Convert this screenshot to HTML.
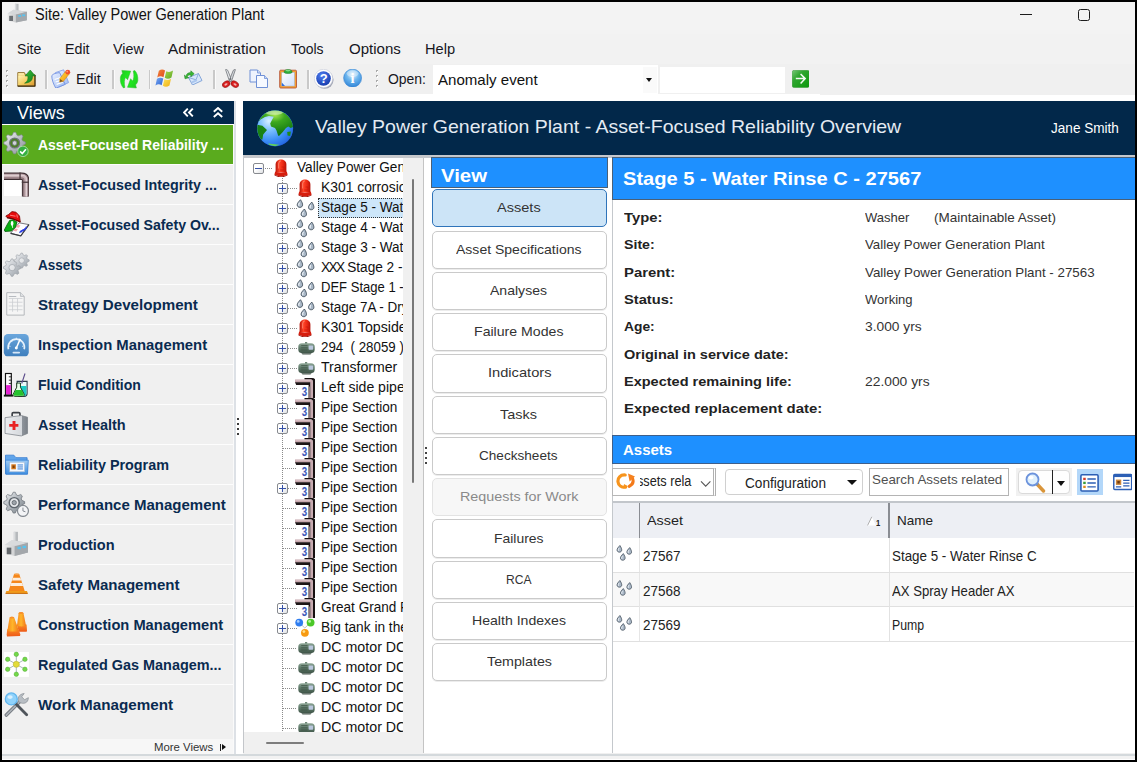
<!DOCTYPE html>
<html lang="en"><head><meta charset="utf-8"><title>Site: Valley Power Generation Plant</title>
<style>
html,body{margin:0;padding:0;width:1137px;height:762px;overflow:hidden;background:#000;font-family:"Liberation Sans",sans-serif}
#app{position:absolute;left:0;top:0;width:1137px;height:762px;background:#000;overflow:hidden}
#app div,#app span.t,#app svg{position:absolute}
span.t{white-space:pre;transform-origin:0 50%;display:block}
</style></head>
<body>
<div id="app">
<div class="window" style="left:2px;top:2px;width:1133px;height:758px;background:#f0f0f0;overflow:hidden">
<div class="titlebar" style="left:0px;top:0px;width:1133px;height:32px;background:#f3f3f3">
<svg style="left:4.3px;top:1.4px" width="22.4" height="21" viewBox="0 0 21 21" preserveAspectRatio="none"><defs><linearGradient id="fg1" x1="0" y1="0" x2="1" y2="0"><stop offset="0" stop-color="#e9e9e9"/><stop offset="1" stop-color="#a9adb0"/></linearGradient></defs>
<rect x="8.4" y="0.8" width="3.4" height="8" fill="#b9bcbf"/><rect x="8.4" y="0.8" width="1.3" height="8" fill="#d8dadc"/>
<path d="M1.5 10.5 L7 6.8 L19.5 8.8 L19.5 17.2 L9 19.5 L1.5 17.6 Z" fill="url(#fg1)"/>
<path d="M1.5 10.5 L7 6.8 L19.5 8.8 L12.5 11.2 Z" fill="#d6d8da"/>
<path d="M9.3 11.5 L19.5 8.8 L19.5 17.2 L9.3 19.5 Z" fill="#a4a8ac"/>
<rect x="3" y="12.8" width="3.6" height="5.2" fill="#6c7074"/>
<rect x="11.5" y="12" width="2.6" height="1.8" fill="#57c3f0"/><rect x="15.2" y="11.4" width="2.8" height="1.8" fill="#57c3f0"/></svg>
<span class="t" style="left:32.60px;top:2.59px;font-size:15.6px;line-height:20px;color:#111;transform:scaleX(0.9297);">Site: Valley Power Generation Plant</span>
<div style="left:1017.8px;top:11.8px;width:12.3px;height:1.2px;background:#1c1c1c;"></div>
<div style="left:1076px;top:6.9px;width:12px;height:11.9px;box-sizing:border-box;border:1.3px solid #1c1c1c;border-radius:2.5px"></div>
</div>
<div class="menubar" style="left:0px;top:32px;width:1133px;height:30px;background:#f2f2f2">
<span class="t" style="left:14.70px;top:5.10px;font-size:15px;line-height:19px;color:#16161e;transform:scaleX(0.9397);">Site</span>
<span class="t" style="left:62.80px;top:5.10px;font-size:15px;line-height:19px;color:#16161e;transform:scaleX(0.9513);">Edit</span>
<span class="t" style="left:111.30px;top:5.10px;font-size:15px;line-height:19px;color:#16161e;transform:scaleX(0.9519);">View</span>
<span class="t" style="left:166.40px;top:5.10px;font-size:15px;line-height:19px;color:#16161e;transform:scaleX(1.0290);">Administration</span>
<span class="t" style="left:289.20px;top:5.10px;font-size:15px;line-height:19px;color:#16161e;transform:scaleX(0.9306);">Tools</span>
<span class="t" style="left:346.50px;top:5.10px;font-size:15px;line-height:19px;color:#16161e;transform:scaleX(1.0019);">Options</span>
<span class="t" style="left:422.50px;top:5.10px;font-size:15px;line-height:19px;color:#16161e;transform:scaleX(0.9754);">Help</span>
</div>
<div class="toolbar" style="left:0px;top:62px;width:1133px;height:30px;background:#f0f0f0">
<div style="left:3.7px;top:6px;width:2px;height:2px;background:#a9a9a9;"></div><div style="left:4.7px;top:7px;width:1.6px;height:1.6px;background:#fff;"></div><div style="left:3.7px;top:11px;width:2px;height:2px;background:#a9a9a9;"></div><div style="left:4.7px;top:12px;width:1.6px;height:1.6px;background:#fff;"></div><div style="left:3.7px;top:16px;width:2px;height:2px;background:#a9a9a9;"></div><div style="left:4.7px;top:17px;width:1.6px;height:1.6px;background:#fff;"></div><div style="left:3.7px;top:21px;width:2px;height:2px;background:#a9a9a9;"></div><div style="left:4.7px;top:22px;width:1.6px;height:1.6px;background:#fff;"></div>
<svg style="left:14.8px;top:5.6px" width="19" height="17.2" viewBox="0 0 19 17.2"><defs><linearGradient id="fd1" x1="0" y1="0" x2="1" y2="1"><stop offset="0" stop-color="#fff3b8"/><stop offset="0.55" stop-color="#f2cc5c"/><stop offset="1" stop-color="#d9942a"/></linearGradient>
<linearGradient id="fd2" x1="0" y1="0" x2="1" y2="1"><stop offset="0" stop-color="#35c03a"/><stop offset="1" stop-color="#167a1c"/></linearGradient></defs>
<path d="M0.8 2.6 L7.4 2.6 L8.4 4.6 L17.8 4.6 L17.8 16 L0.8 16 Z" fill="#e9c766" stroke="#8a6a2a" stroke-width="0.9"/>
<rect x="1.3" y="3.2" width="5.8" height="1.6" fill="#fdf0b4"/>
<rect x="1.2" y="5.4" width="16.2" height="10.2" fill="url(#fd1)"/>
<path d="M0.6 16.2 L18.2 16.2 M18 5 L18 16.4" stroke="#3c2a08" stroke-width="1.2" fill="none"/>
<path d="M13.2 0 L18.4 6 L15.6 6 C15.8 10 13.6 12.8 7.6 13.2 C10.8 11.4 11.2 9 10.8 6 L8 6 Z" fill="url(#fd2)" stroke="#146c18" stroke-width="0.5"/></svg>
<div style="left:43.2px;top:6.2px;width:1.6px;height:18.8px;background:#c9c9c9;"></div><div style="left:44.9px;top:6.2px;width:1px;height:18.8px;background:#fbfbfb;"></div>
<svg style="left:49.4px;top:4.8px" width="19.8" height="19.6" viewBox="0 0 19.8 19.6"><defs><linearGradient id="ed1" x1="0" y1="0" x2="1" y2="1"><stop offset="0" stop-color="#eaf1ff"/><stop offset="1" stop-color="#9db9f2"/></linearGradient>
<linearGradient id="ed2" x1="0" y1="0" x2="1" y2="1"><stop offset="0" stop-color="#ffe23a"/><stop offset="1" stop-color="#f08a14"/></linearGradient></defs>
<path d="M4.4 3.6 L12.6 0.8 L17.6 13.6 L7.6 18.2 Z" fill="url(#ed1)" stroke="#7d9be6" stroke-width="0.8"/>
<path d="M0.8 6.6 C2.4 4.6 5 4 8.6 3.6 L14.2 15.4 L4.8 19.2 C2.6 15.4 0.6 10.4 0.8 6.6 Z" fill="url(#ed1)" stroke="#6f8fe0" stroke-width="0.9"/>
<path d="M3.6 10.6 L9.6 8.6 M4.6 13 L10.8 10.9 M5.6 15.4 L11.8 13.3" stroke="#ffffff" stroke-width="1.1"/>
<path d="M8.8 9.6 L14.6 2.2 L18.2 5 L12.4 12.4 L8.6 13.2 Z" fill="url(#ed2)" stroke="#c07a10" stroke-width="0.4"/>
<path d="M9.2 10 L8.8 13 L12 12.2 Z" fill="#7a5520"/>
<circle cx="16.8" cy="3.2" r="2.4" fill="#f0502a"/><circle cx="16.2" cy="2.6" r="0.9" fill="#ff9a7a"/></svg>
<span class="t" style="left:74.00px;top:4.90px;font-size:15px;line-height:19px;color:#16161e;transform:scaleX(0.9590);">Edit</span>
<div style="left:110.3px;top:6.2px;width:1.6px;height:18.8px;background:#c9c9c9;"></div><div style="left:112px;top:6.2px;width:1px;height:18.8px;background:#fbfbfb;"></div>
<svg style="left:114px;top:2px" width="26" height="26" viewBox="0 0 26 26"><defs><linearGradient id="rf" x1="0" y1="0" x2="1" y2="1"><stop offset="0" stop-color="#22c322"/><stop offset="0.5" stop-color="#1fe81f"/><stop offset="1" stop-color="#19b419"/></linearGradient></defs>
<path d="M5.8 4.4 L14.7 5.1 L11.6 13.7 L9.6 11.4 C8.2 13.4 8 17 8.9 21.4 L7.4 21.9 C5.2 19.6 4 16 4.4 11.6 C4.7 9.8 5.4 8.6 6.6 7.6 Z" fill="url(#rf)" stroke="#2fbf2f" stroke-width="0.5"/>
<path d="M5.8 4.4 L14.7 5.1 L11.6 13.7 L9.6 11.4 C8.2 13.4 8 17 8.9 21.4 L7.4 21.9 C5.2 19.6 4 16 4.4 11.6 C4.7 9.8 5.4 8.6 6.6 7.6 Z" fill="url(#rf)" stroke="#2fbf2f" stroke-width="0.5" transform="rotate(180 13.1 13.2)"/></svg>
<div style="left:146.5px;top:6.2px;width:1.6px;height:18.8px;background:#c9c9c9;"></div><div style="left:148.2px;top:6.2px;width:1px;height:18.8px;background:#fbfbfb;"></div>
<svg style="left:153.4px;top:5px" width="18.5" height="18.5" viewBox="0 0 18 18.5"><defs>
<linearGradient id="wf1" x1="0" y1="0" x2="1" y2="1"><stop offset="0" stop-color="#f0853a"/><stop offset="1" stop-color="#e2491c"/></linearGradient>
<linearGradient id="wf2" x1="0" y1="0" x2="1" y2="1"><stop offset="0" stop-color="#a6d84e"/><stop offset="1" stop-color="#5fa823"/></linearGradient>
<linearGradient id="wf3" x1="0" y1="0" x2="1" y2="1"><stop offset="0" stop-color="#7daaf2"/><stop offset="1" stop-color="#2a63d2"/></linearGradient>
<linearGradient id="wf4" x1="0" y1="0" x2="1" y2="1"><stop offset="0" stop-color="#fce45a"/><stop offset="1" stop-color="#f0ae14"/></linearGradient></defs>
<path d="M3.6 1.8 C5.8 0 8 0.2 9.8 1.6 L8.2 8.2 C6.3 7 4.2 7 2 8.4 Z" fill="url(#wf1)"/>
<path d="M11 2.2 C13 3.4 15.4 3.2 17.8 1.6 L16.2 8.4 C14 10 11.7 10 9.5 8.8 Z" fill="url(#wf2)"/>
<path d="M1.7 9.8 C3.9 8.4 6 8.4 8 9.6 L6.4 16.2 C4.4 15 2.3 15 0.2 16.4 Z" fill="url(#wf3)"/>
<path d="M9.2 10.2 C11.4 11.4 13.6 11.3 15.8 9.8 L14.2 16.5 C12 18 9.8 18.2 7.6 16.8 Z" fill="url(#wf4)"/></svg>
<svg style="left:182px;top:5.5px" width="18.5" height="15.5" viewBox="0 0 18.5 15.5"><path d="M4.5 7.5 L14.5 3.5 L18 10.5 L8.5 15 Z" fill="#d7e6fa" stroke="#7c9fd6" stroke-width="0.9"/>
<path d="M4.5 7.5 L12 9.8 L14.5 3.5" fill="none" stroke="#7c9fd6" stroke-width="0.8"/>
<path d="M7.5 11.5 L12.5 9.3 L13.4 11 L8.3 13.3 Z" fill="#aac6ee"/>
<path d="M6.8 0.8 L6.8 2.6 C4 2.6 2.2 4 2 6.5 L0.4 5 L1 8.8 L4.8 7.8 L3.2 6.8 C3.6 5.4 4.8 4.8 6.8 4.9 L6.8 6.8 L10.2 3.7 Z" fill="#39b636" stroke="#1e7f22" stroke-width="0.5"/></svg>
<div style="left:211.4px;top:6.2px;width:1.6px;height:18.8px;background:#c9c9c9;"></div><div style="left:213.1px;top:6.2px;width:1px;height:18.8px;background:#fbfbfb;"></div>
<svg style="left:219.5px;top:5px" width="17" height="19" viewBox="0 0 17 19"><path d="M3.6 0.6 C4.6 0.2 5.6 0.8 6 2 L9.8 11.6 L7.6 12.6 Z" fill="#e9ebee" stroke="#5d6167" stroke-width="0.7"/>
<path d="M13.4 0.6 C12.4 0.2 11.4 0.8 11 2 L7.2 11.6 L9.4 12.6 Z" fill="#d2d5d9" stroke="#5d6167" stroke-width="0.7"/>
<circle cx="8.5" cy="10" r="0.8" fill="#4a4e54"/>
<ellipse cx="4.2" cy="15.2" rx="4" ry="2.9" transform="rotate(-28 4.2 15.2)" fill="#d81e1e" stroke="#8e0f0f" stroke-width="0.6"/>
<ellipse cx="12.8" cy="15.2" rx="4" ry="2.9" transform="rotate(28 12.8 15.2)" fill="#d81e1e" stroke="#8e0f0f" stroke-width="0.6"/>
<ellipse cx="4" cy="15.4" rx="1.7" ry="1" transform="rotate(-28 4 15.4)" fill="#f4b0b0"/>
<ellipse cx="13" cy="15.4" rx="1.7" ry="1" transform="rotate(28 13 15.4)" fill="#f4b0b0"/></svg>
<svg style="left:247px;top:5px" width="19.5" height="19.5" viewBox="0 0 19.5 19.5"><path d="M1 1 L8.5 1 L11.5 4 L11.5 13 L1 13 Z" fill="#eef3fd" stroke="#6f90d6" stroke-width="1"/>
<path d="M8.5 1 L8.5 4 L11.5 4" fill="#c9d8f6" stroke="#6f90d6" stroke-width="0.8"/>
<path d="M7.5 6.5 L15.5 6.5 L18.5 9.5 L18.5 18.5 L7.5 18.5 Z" fill="#f6f9ff" stroke="#6f90d6" stroke-width="1"/>
<path d="M15.5 6.5 L15.5 9.5 L18.5 9.5" fill="#c9d8f6" stroke="#6f90d6" stroke-width="0.8"/></svg>
<svg style="left:276.5px;top:5px" width="18.2" height="19.6" viewBox="0 0 18.2 19.6"><defs><linearGradient id="ps1" x1="0" y1="0" x2="1" y2="1"><stop offset="0" stop-color="#ffffff"/><stop offset="1" stop-color="#cfe0fb"/></linearGradient></defs>
<rect x="0.7" y="1.2" width="16.8" height="17.8" rx="1" fill="#f5a030" stroke="#b5563a" stroke-width="0.9"/>
<rect x="2.8" y="3.4" width="12.6" height="13.6" fill="url(#ps1)" stroke="#9ab4e4" stroke-width="0.5"/>
<path d="M2.8 13.6 L6 17 L2.8 17 Z" fill="#2f6fe0"/>
<path d="M5 3 C5 -0.4 13.2 -0.4 13.2 3 C13.2 5 5 5 5 3 Z" fill="#2fae3c" stroke="#1d7c28" stroke-width="0.5"/>
<ellipse cx="9" cy="1.6" rx="2.6" ry="0.8" fill="#7fdc86"/></svg>
<div style="left:305px;top:6.2px;width:1.6px;height:18.8px;background:#c9c9c9;"></div><div style="left:306.7px;top:6.2px;width:1px;height:18.8px;background:#fbfbfb;"></div>
<svg style="left:312.2px;top:4.8px" width="19.8" height="19.8" viewBox="0 0 19.8 19.8"><defs><radialGradient id="hg" cx="0.4" cy="0.3" r="0.8"><stop offset="0" stop-color="#4f7df0"/><stop offset="1" stop-color="#1035a6"/></radialGradient></defs>
<circle cx="10.6" cy="10.8" r="9" fill="#a4a8b6"/><circle cx="9.5" cy="9.5" r="9.2" fill="#ffffff" stroke="#c4c9d8" stroke-width="0.6"/><circle cx="9.5" cy="9.5" r="7.3" fill="url(#hg)"/>
<text x="9.6" y="14.2" text-anchor="middle" font-family="Liberation Sans, sans-serif" font-weight="bold" font-size="13" fill="#fff">?</text></svg>
<svg style="left:341px;top:5px" width="19.2" height="18.4" viewBox="0 0 19.2 18.4"><defs><radialGradient id="ig" cx="0.5" cy="0.3" r="0.75"><stop offset="0" stop-color="#e4f3fd"/><stop offset="0.45" stop-color="#6db6ee"/><stop offset="1" stop-color="#2a7fd4"/></radialGradient></defs>
<circle cx="9.6" cy="9.1" r="9" fill="url(#ig)" stroke="#3a86d4" stroke-width="0.6"/>
<ellipse cx="9.6" cy="4.6" rx="6" ry="3.4" fill="#fff" opacity="0.35"/>
<text x="9.6" y="14.4" text-anchor="middle" font-family="Liberation Serif, serif" font-weight="bold" font-size="14.5" fill="#fff">i</text></svg>
<div style="left:373.7px;top:6px;width:2px;height:2px;background:#a9a9a9;"></div><div style="left:374.7px;top:7px;width:1.6px;height:1.6px;background:#fff;"></div><div style="left:373.7px;top:11px;width:2px;height:2px;background:#a9a9a9;"></div><div style="left:374.7px;top:12px;width:1.6px;height:1.6px;background:#fff;"></div><div style="left:373.7px;top:16px;width:2px;height:2px;background:#a9a9a9;"></div><div style="left:374.7px;top:17px;width:1.6px;height:1.6px;background:#fff;"></div><div style="left:373.7px;top:21px;width:2px;height:2px;background:#a9a9a9;"></div><div style="left:374.7px;top:22px;width:1.6px;height:1.6px;background:#fff;"></div>
<span class="t" style="left:385.70px;top:4.90px;font-size:15px;line-height:19px;color:#16161e;transform:scaleX(0.9297);">Open:</span>
<div style="left:431px;top:1px;width:225px;height:29px;background:#fff;"></div>
<div style="left:641px;top:3px;width:14px;height:26px;background:#fafafa;"></div>
<div style="left:644.3px;top:14px;width:0;height:0;border-left:3.5px solid transparent;border-right:3.5px solid transparent;border-top:4px solid #111"></div>
<span class="t" style="left:435.70px;top:5.80px;font-size:15px;line-height:19px;color:#111;transform:scaleX(1.0037);">Anomaly event</span>
<div style="left:658px;top:2.5px;width:125.3px;height:26.5px;background:#fff;"></div>
<svg style="left:789.8px;top:6px" width="17.6" height="17.8" viewBox="0 0 17.6 17.8"><defs><linearGradient id="gg" x1="0" y1="0" x2="1" y2="1"><stop offset="0" stop-color="#78c878"/><stop offset="0.35" stop-color="#2fa62f"/><stop offset="1" stop-color="#0c980c"/></linearGradient></defs>
<rect x="0.2" y="0.2" width="17.2" height="17.4" rx="2.2" fill="url(#gg)" stroke="#2c922c" stroke-width="0.5"/>
<path d="M3.8 8.6 L13 8.6 M8.6 4 L13.2 8.6 L8.6 13.4" fill="none" stroke="#f4fbf4" stroke-width="1.5"/></svg>
</div>
<div style="left:0px;top:92px;width:1133px;height:7.3px;background:#fff;"></div>
<div style="left:818px;top:92px;width:315px;height:1px;background:#f0f0f0;"></div>
<div class="header" style="left:241px;top:99.3px;width:892px;height:53.7px;background:#02284a">
<svg style="left:14.4px;top:8.5px" width="36.6" height="36.9" viewBox="0 0 36.6 36.9"><defs>
<radialGradient id="glo" cx="0.32" cy="0.3" r="0.85"><stop offset="0" stop-color="#d6efff"/><stop offset="0.3" stop-color="#7cc0ff"/><stop offset="0.65" stop-color="#3a8cf5"/><stop offset="1" stop-color="#1a55d8"/></radialGradient>
<radialGradient id="gla" cx="0.5" cy="0.22" r="0.75"><stop offset="0" stop-color="#a6e64e"/><stop offset="0.35" stop-color="#3da81f"/><stop offset="1" stop-color="#0f7210"/></radialGradient>
<clipPath id="glc"><circle cx="18.1" cy="18.3" r="17.9"/></clipPath></defs>
<circle cx="18.1" cy="18.3" r="18.1" fill="#1746b8"/>
<g clip-path="url(#glc)"><rect x="0" y="0" width="36.6" height="36.6" fill="url(#glo)"/>
<path d="M-1 14 L3.5 9.6 L8 6.9 L12 6.1 L16.8 6.7 L15 10 L13.2 13.4 L14 16.5 L18 18.1 L19.5 20.5 L21.1 25.6 L22 26 L25.8 22 L29 18.1 L31.3 16.5 L33.7 18.1 L37 16.5 L37 -1 L-1 -1 Z" fill="url(#gla)"/>
<path d="M-1 14.5 L5.4 15.7 L10 20 L6.2 24.4 L5.4 29.5 L-1 30 Z" fill="#1a8214"/>
<path d="M30.2 22 L33.9 21.6 L33.2 26 L30.6 25.4 Z" fill="#1f8a18"/>
<path d="M10.9 33.6 L22.7 34.7 L18 36.2 L12.5 35.3 Z" fill="#62d05a"/>
<ellipse cx="17" cy="2.6" rx="9" ry="2.2" fill="#e8f8d8" opacity="0.55"/></g></svg>
<span class="t" style="left:71.70px;top:13.72px;font-size:19px;line-height:24px;color:#e4ebf3;transform:scaleX(1.0267);">Valley Power Generation Plant - Asset-Focused Reliability Overview</span>
<span class="t" style="left:807.60px;top:17.68px;font-size:14.5px;line-height:18px;color:#fff;transform:scaleX(0.9359);">Jane Smith</span>
</div>
<div style="left:240.5px;top:153px;width:892.5px;height:2.6px;background:#c6c8cc;"></div>
<div class="views" style="left:0px;top:99px;width:232px;height:652.5px;background:#f0f0f0">
<div class="views-head" style="left:0px;top:0.3px;width:232px;height:22.7px;background:#02284a">
<span class="t" style="left:15.20px;top:-0.41px;font-size:18.5px;line-height:23px;color:#fff;transform:scaleX(0.9732);">Views</span>
<svg style="left:180.6px;top:7.2px" width="11" height="9" viewBox="0 0 11 9"><path d="M4.8 0.6 L1 4.5 L4.8 8.4 M9.8 0.6 L6 4.5 L9.8 8.4" fill="none" stroke="#fff" stroke-width="1.9"/></svg>
<svg style="left:210.6px;top:6px" width="10" height="11" viewBox="0 0 10 11"><path d="M0.8 4.8 L5 1 L9.2 4.8 M0.8 10 L5 6.2 L9.2 10" fill="none" stroke="#fff" stroke-width="1.9"/></svg>
</div>
<div style="left:0px;top:23px;width:232px;height:1px;background:#fff;"></div>
<div class="view-item" style="left:0px;top:24px;width:231px;height:40px;background:#5aab1e;border-bottom:1px solid #fdfdfd;box-sizing:border-box">
<svg style="left:1.2px;top:5.9px" width="26.6" height="26.6" viewBox="0 0 32 32"><defs><linearGradient id="gm1" x1="0" y1="0" x2="1" y2="1"><stop offset="0" stop-color="#f4f5f6"/><stop offset="0.5" stop-color="#b9bec4"/><stop offset="1" stop-color="#8a9097"/></linearGradient></defs><polygon points="26.94,13.23 26.94,15.77 23.45,17.37 22.71,19.16 24.05,22.75 22.25,24.55 18.66,23.21 16.87,23.95 15.27,27.44 12.73,27.44 11.13,23.95 9.34,23.21 5.75,24.55 3.95,22.75 5.29,19.16 4.55,17.37 1.06,15.77 1.06,13.23 4.55,11.63 5.29,9.84 3.95,6.25 5.75,4.45 9.34,5.79 11.13,5.05 12.73,1.56 15.27,1.56 16.87,5.05 18.66,5.79 22.25,4.45 24.05,6.25 22.71,9.84 23.45,11.63" fill="url(#gm1)" stroke="#7f868d" stroke-width="0.8"/><circle cx="14" cy="14.5" r="0.1" fill="#fff" fill-opacity="0.55" stroke="#7f868d" stroke-width="0.8"/><circle cx="14" cy="14.5" r="6" fill="#4d7f25" stroke="#6d747b" stroke-width="1.4"/><circle cx="14" cy="14.5" r="2.8" fill="#cfd3d7" stroke="#6d747b" stroke-width="1"/><circle cx="24" cy="24.5" r="6.3" fill="#35b040" stroke="#bfe6b8" stroke-width="0.9"/><path d="M20.6 24.6 L23.2 27.2 L27.6 22" fill="none" stroke="#fff" stroke-width="2"/></svg>
<span class="t" style="left:35.60px;top:10.46px;font-size:15.4px;line-height:19px;color:#fff;font-weight:bold;transform:scaleX(0.9079);">Asset-Focused Reliability ...</span>
</div>
<div class="view-item" style="left:0px;top:64px;width:231px;height:40px;background:#f0f0f0;border-bottom:1px solid #fdfdfd;box-sizing:border-box">
<svg style="left:2px;top:6.3px" width="25.4" height="25.4" viewBox="0 0 25.4 25.4"><rect x="0" y="8.6" width="18" height="16.4" fill="#fff"/>
<path d="M0 5.2 L17.6 5.2 Q21.6 5.2 21.6 9.2 L21.6 25.4" fill="none" stroke="#3b2d31" stroke-width="7.4"/>
<path d="M0 5.2 L17.6 5.2 Q21.6 5.2 21.6 9.2 L21.6 25.4" fill="none" stroke="#8f777c" stroke-width="5.6"/>
<path d="M0 4.8 L17.8 4.8 Q22 4.8 22 9 L22 25.4" fill="none" stroke="#c9b3b7" stroke-width="3"/>
<path d="M0 4.3 L18 4.3 Q22.5 4.3 22.5 8.8 L22.5 25.4" fill="none" stroke="#e2d3d6" stroke-width="1"/>
<rect x="17.8" y="10.6" width="7.6" height="1.3" fill="#4a3a3e"/><rect x="15.4" y="1.5" width="1.3" height="7.4" fill="#4a3a3e"/></svg>
<span class="t" style="left:35.60px;top:10.46px;font-size:15.4px;line-height:19px;color:#0a2b50;font-weight:bold;transform:scaleX(0.9302);">Asset-Focused Integrity ...</span>
</div>
<div class="view-item" style="left:0px;top:104px;width:231px;height:40px;background:#f0f0f0;border-bottom:1px solid #fdfdfd;box-sizing:border-box">
<svg style="left:2px;top:6px" width="26" height="26" viewBox="0 0 26 26"><path d="M15.2 11.8 L24.9 13.6 L16.8 24.9 L6.6 22.3 Z" fill="#fdfdff" stroke="#6a6a72" stroke-width="0.9"/>
<path d="M24.9 13.6 L16.8 24.9 L6.6 22.3" fill="none" stroke="#3a3a40" stroke-width="1.2"/>
<path d="M13.5 13.8 L16.5 14.4 L14.8 16.8 L11.8 16.2 Z M11 17.4 L14 18 L12.3 20.4 L9.3 19.8 Z" fill="#f7a8b0"/>
<path d="M15.5 21.8 L17.6 19.4 L17.2 21 L19.4 18.4 L19 20 L21.2 17.4 L20.8 19 L22.6 15.6" fill="none" stroke="#2b3de0" stroke-width="1.3"/>
<path d="M5.8 9.2 L9 8.8 L13 11 L11.5 16 L7.5 20 L1 20.5 L0.3 19 L3.5 13 Z" fill="#0aae12" stroke="#075c0a" stroke-width="0.8"/>
<ellipse cx="8.1" cy="12.4" rx="1.35" ry="2.3" fill="#fff"/><path d="M8.2 14 L8.6 16.8" stroke="#fff" stroke-width="0.9"/>
<path d="M4.5 3.5 L8 0.6 L12 1.2 L15.5 5 L16.3 11 L13 9.5 L8 7.6 L3 6.6 L1.8 5 Z" fill="#e60b0b" stroke="#7a0505" stroke-width="0.8"/>
<path d="M6 4.2 L11.5 5.2 M12.8 3.4 L13.4 6.6" stroke="#ff8a8a" stroke-width="0.9" fill="none"/>
<path d="M3 6.6 L8 7.6 L13 9.5 L16.3 11" fill="none" stroke="#6a0404" stroke-width="1.1"/></svg>
<span class="t" style="left:35.60px;top:10.46px;font-size:15.4px;line-height:19px;color:#0a2b50;font-weight:bold;transform:scaleX(0.9209);">Asset-Focused Safety Ov...</span>
</div>
<div class="view-item" style="left:0px;top:144px;width:231px;height:40px;background:#f0f0f0;border-bottom:1px solid #fdfdfd;box-sizing:border-box">
<svg style="left:1.2px;top:5.9px" width="26.6" height="26.6" viewBox="0 0 32 32"><defs><linearGradient id="gm2" x1="0" y1="0" x2="1" y2="1"><stop offset="0" stop-color="#f1f2f4"/><stop offset="0.6" stop-color="#bcc1c7"/><stop offset="1" stop-color="#969ca3"/></linearGradient></defs><polygon points="21.45,18.97 21.45,21.03 18.64,22.32 18.04,23.76 19.12,26.66 17.66,28.12 14.76,27.04 13.32,27.64 12.03,30.45 9.97,30.45 8.68,27.64 7.24,27.04 4.34,28.12 2.88,26.66 3.96,23.76 3.36,22.32 0.55,21.03 0.55,18.97 3.36,17.68 3.96,16.24 2.88,13.34 4.34,11.88 7.24,12.96 8.68,12.36 9.97,9.55 12.03,9.55 13.32,12.36 14.76,12.96 17.66,11.88 19.12,13.34 18.04,16.24 18.64,17.68" fill="url(#gm2)" stroke="#9aa0a6" stroke-width="0.8"/><circle cx="11" cy="20" r="3.78" fill="#fff" fill-opacity="0.55" stroke="#9aa0a6" stroke-width="0.8"/><polygon points="31.46,10.62 31.46,12.38 29.05,13.49 28.53,14.72 29.46,17.21 28.21,18.46 25.72,17.53 24.49,18.05 23.38,20.46 21.62,20.46 20.51,18.05 19.28,17.53 16.79,18.46 15.54,17.21 16.47,14.72 15.95,13.49 13.54,12.38 13.54,10.62 15.95,9.51 16.47,8.28 15.54,5.79 16.79,4.54 19.28,5.47 20.51,4.95 21.62,2.54 23.38,2.54 24.49,4.95 25.72,5.47 28.21,4.54 29.46,5.79 28.53,8.28 29.05,9.51" fill="url(#gm2)" stroke="#a3a8ae" stroke-width="0.8"/><circle cx="22.5" cy="11.5" r="3.24" fill="#fff" fill-opacity="0.55" stroke="#a3a8ae" stroke-width="0.8"/></svg>
<span class="t" style="left:35.60px;top:10.46px;font-size:15.4px;line-height:19px;color:#0a2b50;font-weight:bold;transform:scaleX(0.8795);">Assets</span>
</div>
<div class="view-item" style="left:0px;top:184px;width:231px;height:40px;background:#f0f0f0;border-bottom:1px solid #fdfdfd;box-sizing:border-box">
<svg style="left:1.2px;top:5.9px" width="26.6" height="26.6" viewBox="0 0 32 32"><path d="M4.5 2 L21 2 L25.5 6.5 L25.5 29 L4.5 29 Z" fill="#f5f5f5" stroke="#a9adb2" stroke-width="1"/>
<path d="M21 2 L21 6.5 L25.5 6.5" fill="#e0e2e5" stroke="#a9adb2" stroke-width="0.8"/>
<path d="M7 9 L23.5 9 M7 13.5 L23.5 13.5 M7 18 L23.5 18 M7 22.5 L23.5 22.5 M11.5 9 L11.5 25 M17.5 9 L17.5 25" stroke="#c9ccd0" stroke-width="0.9" fill="none"/>
<rect x="7" y="6" width="9" height="1.2" fill="#b7bbc0"/></svg>
<span class="t" style="left:35.60px;top:10.46px;font-size:15.4px;line-height:19px;color:#0a2b50;font-weight:bold;transform:scaleX(0.9839);">Strategy Development</span>
</div>
<div class="view-item" style="left:0px;top:224px;width:231px;height:40px;background:#f0f0f0;border-bottom:1px solid #fdfdfd;box-sizing:border-box">
<svg style="left:1.2px;top:5.9px" width="26.6" height="26.6" viewBox="0 0 32 32"><defs><linearGradient id="gau" x1="0" y1="0" x2="0" y2="1"><stop offset="0" stop-color="#6aa6dc"/><stop offset="1" stop-color="#3f7fbd"/></linearGradient></defs>
<rect x="1" y="3.5" width="30" height="27" rx="5" fill="url(#gau)"/>
<path d="M6.5 22 A9.8 9.8 0 1 1 25.5 22" fill="none" stroke="#e6f1fb" stroke-width="2"/>
<path d="M16 20.5 L20.8 9.5" stroke="#fff" stroke-width="1.8"/><circle cx="16" cy="20.5" r="1.8" fill="#fff"/>
<rect x="11.5" y="25" width="9" height="2.2" rx="1" fill="#d7e7f7"/>
<path d="M7 18 L9 18.5 M9.5 11.5 L11 13 M16 8 L16 10 M25 18 L23 18.5" stroke="#e6f1fb" stroke-width="1.1"/></svg>
<span class="t" style="left:35.60px;top:10.46px;font-size:15.4px;line-height:19px;color:#0a2b50;font-weight:bold;transform:scaleX(0.9646);">Inspection Management</span>
</div>
<div class="view-item" style="left:0px;top:264px;width:231px;height:40px;background:#f0f0f0;border-bottom:1px solid #fdfdfd;box-sizing:border-box">
<svg style="left:1.2px;top:5.9px" width="26.6" height="26.6" viewBox="0 0 32 32"><rect x="3" y="3" width="7" height="26" fill="#fff" stroke="#111" stroke-width="1.4"/>
<rect x="3.7" y="17" width="5.6" height="11.3" fill="#e11fd0"/>
<path d="M7 7 L10 7 M7 11 L10 11 M7 15 L10 15" stroke="#111" stroke-width="1"/>
<rect x="1" y="28.5" width="11" height="2.3" fill="#111"/>
<path d="M17 12.5 L29 12.5 L29 27 C29 29.5 27.5 30.5 25.5 30.5 L20.5 30.5 C18.5 30.5 17 29.5 17 27 Z" fill="#e9fbfb" stroke="#2a3a4a" stroke-width="1.3"/>
<path d="M17.8 18 L28.2 18 L28.2 27 C28.2 29 27 29.8 25.5 29.8 L20.5 29.8 C19 29.8 17.8 29 17.8 27 Z" fill="#1ccbc6"/>
<path d="M18.5 14.5 L21 14.5 L21 19.5 L25.5 28 C26 29.5 25 30.5 23.5 30.5 L14 30.5 C12.5 30.5 11.7 29.5 12.3 28 L16.5 19.5 L16.5 14.5 Z" fill="#e8ffe8" stroke="#1a3a1a" stroke-width="1.2"/>
<path d="M15.2 23 L22.5 23 L25 28 C25.3 29.2 24.6 29.8 23.5 29.8 L14 29.8 C13 29.8 12.5 29.2 12.9 28 Z" fill="#25c22d"/>
<path d="M26.5 3 L22.5 15" stroke="#5b4a8a" stroke-width="1.3"/></svg>
<span class="t" style="left:35.60px;top:10.46px;font-size:15.4px;line-height:19px;color:#0a2b50;font-weight:bold;transform:scaleX(0.9119);">Fluid Condition</span>
</div>
<div class="view-item" style="left:0px;top:304px;width:231px;height:40px;background:#f0f0f0;border-bottom:1px solid #fdfdfd;box-sizing:border-box">
<svg style="left:1.2px;top:5.9px" width="26.6" height="26.6" viewBox="0 0 32 32"><defs><linearGradient id="mk" x1="0" y1="0" x2="1" y2="0"><stop offset="0" stop-color="#eceef1"/><stop offset="0.75" stop-color="#d5d8dc"/><stop offset="0.76" stop-color="#8e949b"/><stop offset="1" stop-color="#7b8188"/></linearGradient></defs>
<path d="M11 6 L11 3.2 C11 2.4 11.6 2 12.4 2 L19 2 C19.8 2 20.4 2.4 20.4 3.2 L20.4 6" fill="none" stroke="#3c4046" stroke-width="2"/>
<path d="M2.5 8 L22 5.5 L29.5 7.5 L29.5 27 L22 30 L2.5 27 Z" fill="url(#mk)" stroke="#7b8188" stroke-width="0.9"/>
<path d="M10 13.5 L14 13.5 L14 10 L17.5 10 L17.5 13.5 L21 13.5 L21 17 L17.5 17 L17.5 20.8 L14 20.8 L14 17 L10 17 Z" fill="#e82222" transform="translate(-2.5,2)"/></svg>
<span class="t" style="left:35.60px;top:10.46px;font-size:15.4px;line-height:19px;color:#0a2b50;font-weight:bold;transform:scaleX(0.9406);">Asset Health</span>
</div>
<div class="view-item" style="left:0px;top:344px;width:231px;height:40px;background:#f0f0f0;border-bottom:1px solid #fdfdfd;box-sizing:border-box">
<svg style="left:1.2px;top:5.9px" width="26.6" height="26.6" viewBox="0 0 32 32"><defs><linearGradient id="fo" x1="0" y1="0" x2="0" y2="1"><stop offset="0" stop-color="#9ecbf5"/><stop offset="1" stop-color="#3f8fe0"/></linearGradient></defs>
<path d="M3 5 L13 5 L15.5 8 L29 8 L29 27.5 L3 27.5 Z" fill="#5fa4ea" stroke="#2f78cf" stroke-width="0.9"/>
<path d="M3 11 L30.5 11 L29.5 28 L3.5 28 Z" fill="url(#fo)" stroke="#2f78cf" stroke-width="0.8"/>
<rect x="8" y="13.5" width="18" height="11.5" fill="#f4f8fd" stroke="#9fb6d2" stroke-width="0.7"/>
<rect x="10" y="16" width="5.5" height="6" fill="#d67a1f"/><rect x="11.5" y="17.5" width="2.5" height="3" fill="#7a3f0c"/>
<path d="M17.5 16.8 L24 16.8 M17.5 19.2 L24 19.2 M17.5 21.6 L24 21.6" stroke="#3b7fd6" stroke-width="1.2"/></svg>
<span class="t" style="left:35.60px;top:10.46px;font-size:15.4px;line-height:19px;color:#0a2b50;font-weight:bold;transform:scaleX(0.9338);">Reliability Program</span>
</div>
<div class="view-item" style="left:0px;top:384px;width:231px;height:40px;background:#f0f0f0;border-bottom:1px solid #fdfdfd;box-sizing:border-box">
<svg style="left:1.2px;top:5.9px" width="26.6" height="26.6" viewBox="0 0 32 32"><defs><linearGradient id="gm3" x1="0" y1="0" x2="1" y2="1"><stop offset="0" stop-color="#eef0f2"/><stop offset="0.5" stop-color="#aeb4ba"/><stop offset="1" stop-color="#7a8188"/></linearGradient></defs><polygon points="26.04,12.76 26.04,15.24 22.66,16.78 21.95,18.51 23.24,21.99 21.49,23.74 18.01,22.45 16.28,23.16 14.74,26.54 12.26,26.54 10.72,23.16 8.99,22.45 5.51,23.74 3.76,21.99 5.05,18.51 4.34,16.78 0.96,15.24 0.96,12.76 4.34,11.22 5.05,9.49 3.76,6.01 5.51,4.26 8.99,5.55 10.72,4.84 12.26,1.46 14.74,1.46 16.28,4.84 18.01,5.55 21.49,4.26 23.24,6.01 21.95,9.49 22.66,11.22" fill="url(#gm3)" stroke="#666d74" stroke-width="0.8"/><circle cx="13.5" cy="14" r="0.1" fill="#fff" fill-opacity="0.55" stroke="#666d74" stroke-width="0.8"/><circle cx="13.5" cy="14" r="6" fill="#e4e6e9" stroke="#5f666d" stroke-width="1.7"/><circle cx="13.5" cy="14" r="2.6" fill="#9da3a9" stroke="#5f666d" stroke-width="1"/><circle cx="24" cy="24" r="6.6" fill="#f3f4f6" stroke="#858b92" stroke-width="1.5"/><path d="M24 20 L24 24 L27 25" fill="none" stroke="#858b92" stroke-width="1.2"/></svg>
<span class="t" style="left:35.60px;top:10.46px;font-size:15.4px;line-height:19px;color:#0a2b50;font-weight:bold;transform:scaleX(0.9753);">Performance Management</span>
</div>
<div class="view-item" style="left:0px;top:424px;width:231px;height:40px;background:#f0f0f0;border-bottom:1px solid #fdfdfd;box-sizing:border-box">
<svg style="left:1.2px;top:5.9px" width="26.6" height="26.6" viewBox="0 0 32 32"><defs><linearGradient id="fg2" x1="0" y1="0" x2="1" y2="0"><stop offset="0" stop-color="#ececec"/><stop offset="1" stop-color="#a6aaae"/></linearGradient></defs>
<rect x="13" y="1" width="5" height="13" fill="#b6b9bc"/><rect x="13" y="1" width="2" height="13" fill="#d9dbdd"/>
<path d="M2 16.5 L10.5 11 L30 14 L30 26 L14 30 L2 27 Z" fill="url(#fg2)"/>
<path d="M2 16.5 L10.5 11 L30 14 L19 18 Z" fill="#d9dbdd"/>
<path d="M14 18.5 L30 14 L30 26 L14 30 Z" fill="#a3a7ab"/>
<rect x="4.5" y="20" width="5.5" height="8" fill="#63676b"/>
<rect x="17.5" y="19" width="4" height="2.8" fill="#57c3f0"/><rect x="23.5" y="17.8" width="4.2" height="2.8" fill="#57c3f0"/></svg>
<span class="t" style="left:35.60px;top:10.46px;font-size:15.4px;line-height:19px;color:#0a2b50;font-weight:bold;transform:scaleX(0.9430);">Production</span>
</div>
<div class="view-item" style="left:0px;top:464px;width:231px;height:40px;background:#f0f0f0;border-bottom:1px solid #fdfdfd;box-sizing:border-box">
<svg style="left:1.2px;top:5.9px" width="26.6" height="26.6" viewBox="0 0 32 32"><g transform="translate(2.2,0.9) scale(0.89)"><path d="M12.5 3 L19.5 3 L27 26.5 L5 26.5 Z" fill="#f5871a"/>
<path d="M11 8 L21 8 L22.2 11.8 L9.8 11.8 Z" fill="#fdeedd"/><path d="M8.7 15.2 L23.3 15.2 L24.7 19.4 L7.3 19.4 Z" fill="#fdeedd"/>
<ellipse cx="16" cy="3.2" rx="3.5" ry="1.2" fill="#f7a450"/>
<path d="M2 26 L30 26 L31 29 L1 29 Z" fill="#f09a1a"/><rect x="1" y="28.6" width="30" height="1.5" fill="#c9731a"/></g></svg>
<span class="t" style="left:35.60px;top:10.46px;font-size:15.4px;line-height:19px;color:#0a2b50;font-weight:bold;transform:scaleX(0.9789);">Safety Management</span>
</div>
<div class="view-item" style="left:0px;top:504px;width:231px;height:40px;background:#f0f0f0;border-bottom:1px solid #fdfdfd;box-sizing:border-box">
<svg style="left:2px;top:6px" width="26" height="27" viewBox="0 0 26 27"><defs><linearGradient id="cn1" x1="0" y1="0" x2="1" y2="0"><stop offset="0" stop-color="#f78a1c"/><stop offset="0.45" stop-color="#ffb52a"/><stop offset="1" stop-color="#f0761a"/></linearGradient>
<linearGradient id="cn2" x1="0" y1="0" x2="0" y2="1"><stop offset="0" stop-color="#f98a24"/><stop offset="1" stop-color="#ee5a18"/></linearGradient></defs>
<path d="M12.6 13.6 L22.6 13.6 L23 20 L22.6 20.8 L15 20.8 Z" fill="url(#cn2)"/>
<path d="M14.6 2.2 C15.4 0.9 18.8 0.9 19.5 2.2 L22 14.6 C20 15.8 15 15.8 13 14.6 Z" fill="url(#cn1)"/>
<path d="M3.2 18.3 L14.6 18.3 L16.3 23.4 L16 25 L3 25.4 L2.7 23.6 Z" fill="url(#cn2)"/>
<path d="M5.5 6.8 C6.3 5.5 9.6 5.5 10.3 6.8 L14.8 19.4 C12 21 6 21 3.4 19.4 Z" fill="url(#cn1)"/>
<ellipse cx="7.9" cy="6.6" rx="2.3" ry="0.9" fill="#f98e2c"/><ellipse cx="17" cy="2" rx="2.3" ry="0.9" fill="#f98e2c"/></svg>
<span class="t" style="left:35.60px;top:10.46px;font-size:15.4px;line-height:19px;color:#0a2b50;font-weight:bold;transform:scaleX(0.9536);">Construction Management</span>
</div>
<div class="view-item" style="left:0px;top:544px;width:231px;height:40px;background:#f0f0f0;border-bottom:1px solid #fdfdfd;box-sizing:border-box">
<svg style="left:1.2px;top:5.9px" width="26.6" height="26.6" viewBox="0 0 32 32"><rect x="1.2" y="1.2" width="30" height="30" fill="#fff"/><path d="M16 16 L16.0 28.0" stroke="#9aa" stroke-width="1"/><path d="M16 16 L5.6 22.0" stroke="#9aa" stroke-width="1"/><path d="M16 16 L5.6 10.0" stroke="#9aa" stroke-width="1"/><path d="M16 16 L16.0 4.0" stroke="#9aa" stroke-width="1"/><path d="M16 16 L26.4 10.0" stroke="#9aa" stroke-width="1"/><path d="M16 16 L26.4 22.0" stroke="#9aa" stroke-width="1"/><circle cx="16.0" cy="28.0" r="2.7" fill="#74d84a" stroke="#46a22a" stroke-width="0.5"/><circle cx="5.6" cy="22.0" r="2.7" fill="#74d84a" stroke="#46a22a" stroke-width="0.5"/><circle cx="5.6" cy="10.0" r="2.7" fill="#74d84a" stroke="#46a22a" stroke-width="0.5"/><circle cx="16.0" cy="4.0" r="2.7" fill="#74d84a" stroke="#46a22a" stroke-width="0.5"/><circle cx="26.4" cy="10.0" r="2.7" fill="#74d84a" stroke="#46a22a" stroke-width="0.5"/><circle cx="26.4" cy="22.0" r="2.7" fill="#74d84a" stroke="#46a22a" stroke-width="0.5"/><circle cx="16" cy="16" r="3.7" fill="#e3dc3a" stroke="#aaa420" stroke-width="0.5"/></svg>
<span class="t" style="left:35.60px;top:10.46px;font-size:15.4px;line-height:19px;color:#0a2b50;font-weight:bold;transform:scaleX(0.9374);">Regulated Gas Managem...</span>
</div>
<div class="view-item" style="left:0px;top:584px;width:231px;height:40px;background:#f0f0f0;border-bottom:1px solid #f0f0f0;box-sizing:border-box">
<svg style="left:1.2px;top:5.9px" width="26.6" height="26.6" viewBox="0 0 32 32"><path d="M4 29 L20.5 12.5" stroke="#70767c" stroke-width="4.2" stroke-linecap="round"/>
<path d="M4 29 L20.5 12.5" stroke="#a9afb5" stroke-width="2" stroke-linecap="round"/>
<path d="M19.5 13.5 C16.5 9.5 19 3.5 25.5 3 L22.5 7 L26 10.5 L30.5 8 C30.5 14.5 24.5 16.5 19.5 13.5 Z" fill="#b8bec4" stroke="#868c92" stroke-width="0.8"/>
<path d="M14.5 14.5 L28.5 28.5" stroke="#4f555b" stroke-width="3.4" stroke-linecap="round"/>
<circle cx="10" cy="9.5" r="7.2" fill="#8fd2fb" stroke="#62b6ee" stroke-width="1.6"/><ellipse cx="8.5" cy="7.3" rx="3.2" ry="2.2" fill="#d8f0fe"/></svg>
<span class="t" style="left:35.60px;top:10.46px;font-size:15.4px;line-height:19px;color:#0a2b50;font-weight:bold;transform:scaleX(0.9887);">Work Management</span>
</div>
<div style="left:231px;top:24px;width:1px;height:629px;background:#fafafa;"></div>
<div class="more-views" style="left:0px;top:637.5px;width:231px;height:15px;background:#f7f7f7">
<span class="t" style="left:151.50px;top:1.98px;font-size:11.3px;line-height:14px;color:#333;transform:scaleX(1.0083);">More Views</span>
<div style="left:217.5px;top:5px;width:1.2px;height:7px;background:#222;"></div>
<div style="left:220px;top:5px;width:0;height:0;border-top:3.5px solid transparent;border-bottom:3.5px solid transparent;border-left:4.5px solid #111"></div>
</div>
</div>
<div style="left:232px;top:99px;width:1.8px;height:652.5px;background:#dde1e6;"></div>
<div style="left:233.8px;top:99px;width:7.2px;height:652.5px;background:#fff;"></div>
<div style="left:234.8px;top:416px;width:2.4px;height:2.3px;background:#3c3c3c;"></div>
<div style="left:234.8px;top:421px;width:2.4px;height:2.3px;background:#3c3c3c;"></div>
<div style="left:234.8px;top:426px;width:2.4px;height:2.3px;background:#3c3c3c;"></div>
<div style="left:234.8px;top:431px;width:2.4px;height:2.3px;background:#3c3c3c;"></div>
<div style="left:0px;top:751.5px;width:1133px;height:2.5px;background:#d4d9dc;"></div>
<div style="left:0px;top:754px;width:1133px;height:3px;background:#f2f2f2;"></div>
<div style="left:0px;top:757px;width:1133px;height:1px;background:#fff;"></div>
<div class="tree" style="left:240.5px;top:155.6px;width:181px;height:595.4px;background:#fff;overflow:hidden">
<div style="left:0px;top:0px;width:1.6px;height:595.4px;background:#c3c6ca;"></div>
<div class="tree-rows" style="left:1.6px;top:0px;width:158.5px;height:574.6px;overflow:hidden;background:#fff">
<div style="left:9.1px;top:5.7px;width:10.8px;height:10.4px;box-sizing:border-box;border:1.4px solid #878a8f;background:linear-gradient(135deg,#fff 40%,#dfe1e4);border-radius:2px"></div><div style="left:11.1px;top:10.3px;width:6.8px;height:1.3px;background:#3551a8;"></div>
<div style="left:20.9px;top:10.4px;width:7px;height:1px;background:transparent;background-image:repeating-linear-gradient(90deg,#8a8a8a 0 1px,transparent 1px 2px)"></div>
<svg style="left:30.1px;top:1.4px" width="14" height="18.2" viewBox="0 0 14 18.2"><defs><linearGradient id="bc" x1="0" y1="0" x2="1" y2="0"><stop offset="0" stop-color="#b5160a"/><stop offset="0.35" stop-color="#ff4428"/><stop offset="0.7" stop-color="#ea2812"/><stop offset="1" stop-color="#b21208"/></linearGradient></defs>
<path d="M1.6 13.5 L1.6 5.4 C1.6 -1.2 12.4 -1.2 12.4 5.4 L12.4 13.5 Z" fill="url(#bc)"/>
<path d="M1.2 12.6 C4 14 10 14 12.8 12.6 L13.6 15.6 C10 18 4 18 0.4 15.6 Z" fill="#d61e0e"/>
<path d="M0.4 15.6 C4 18 10 18 13.6 15.6 L13.4 16.6 C10 18.8 4 18.8 0.6 16.6 Z" fill="#9a0e06"/>
<path d="M4.6 9.5 L4.6 4.6 C4.8 3 5.8 2 7 1.8" stroke="#ff8a70" stroke-width="1.1" fill="none" opacity="0.8"/>
<path d="M7.6 8 L10 8 L10 11 L6.2 11" stroke="#c21a0c" stroke-width="0.9" fill="none" opacity="0.7"/></svg>
<span class="t" style="left:53.00px;top:0.15px;font-size:14px;line-height:18px;color:#111;transform:scaleX(0.9725);">Valley Power Generation</span>
<div style="left:37.6px;top:20.4px;width:1px;height:556px;background:transparent;background-image:repeating-linear-gradient(180deg,#8a8a8a 0 1px,transparent 1px 2px)"></div>
<div class="tree-row" style="left:25.9px;top:20.8px;width:140px;height:20px;">
<div style="left:6.8px;top:4.8px;width:10.8px;height:10.4px;box-sizing:border-box;border:1.4px solid #878a8f;background:linear-gradient(135deg,#fff 40%,#dfe1e4);border-radius:2px"></div><div style="left:8.8px;top:9.4px;width:6.8px;height:1.3px;background:#3551a8;"></div><div style="left:11.55px;top:6.6px;width:1.3px;height:6.8px;background:#3551a8;"></div>
<div style="left:18px;top:9.5px;width:9px;height:1px;background:transparent;background-image:repeating-linear-gradient(90deg,#8a8a8a 0 1px,transparent 1px 2px)"></div>
<svg style="left:28px;top:0.6px" width="14" height="18.2" viewBox="0 0 14 18.2"><path d="M1.6 13.5 L1.6 5.4 C1.6 -1.2 12.4 -1.2 12.4 5.4 L12.4 13.5 Z" fill="url(#bc)"/>
<path d="M1.2 12.6 C4 14 10 14 12.8 12.6 L13.6 15.6 C10 18 4 18 0.4 15.6 Z" fill="#d61e0e"/>
<path d="M0.4 15.6 C4 18 10 18 13.6 15.6 L13.4 16.6 C10 18.8 4 18.8 0.6 16.6 Z" fill="#9a0e06"/>
<path d="M4.6 9.5 L4.6 4.6 C4.8 3 5.8 2 7 1.8" stroke="#ff8a70" stroke-width="1.1" fill="none" opacity="0.8"/>
<path d="M7.6 8 L10 8 L10 11 L6.2 11" stroke="#c21a0c" stroke-width="0.9" fill="none" opacity="0.7"/></svg>
<span class="t" style="left:51.20px;top:-0.65px;font-size:14px;line-height:18px;color:#111;transform:scaleX(0.9899);">K301 corrosion</span>
</div>
<div class="tree-row" style="left:25.9px;top:40.8px;width:140px;height:20px;">
<div style="left:6.8px;top:4.8px;width:10.8px;height:10.4px;box-sizing:border-box;border:1.4px solid #878a8f;background:linear-gradient(135deg,#fff 40%,#dfe1e4);border-radius:2px"></div><div style="left:8.8px;top:9.4px;width:6.8px;height:1.3px;background:#3551a8;"></div><div style="left:11.55px;top:6.6px;width:1.3px;height:6.8px;background:#3551a8;"></div>
<div style="left:18px;top:9.5px;width:9px;height:1px;background:transparent;background-image:repeating-linear-gradient(90deg,#8a8a8a 0 1px,transparent 1px 2px)"></div>
<div style="left:48px;top:-0.1px;width:90px;height:19.5px;box-sizing:border-box;background:#cde6f9;border:1px dotted #333"></div>
<svg style="left:26px;top:0px" width="19" height="20" viewBox="0 0 19 20"><g transform="translate(3.9,5.6) scale(1)"><path d="M0.6 -3.9 C2.3 -1.4 2.7 0.2 2.7 1.3 C2.7 2.8 1.5 3.8 0 3.8 C-1.5 3.8 -2.7 2.8 -2.7 1.3 C-2.7 -0.2 -1.4 -1.8 0.6 -3.9 Z" fill="#a9b7c6" stroke="#35424f" stroke-width="0.8"/><path d="M-0.3 -0.9 C-1.3 0.2 -1.4 1.4 -0.8 2.2" stroke="#f4f8fb" stroke-width="1.1" fill="none"/></g><g transform="translate(15.2,8) scale(1)"><path d="M0.6 -3.9 C2.3 -1.4 2.7 0.2 2.7 1.3 C2.7 2.8 1.5 3.8 0 3.8 C-1.5 3.8 -2.7 2.8 -2.7 1.3 C-2.7 -0.2 -1.4 -1.8 0.6 -3.9 Z" fill="#a9b7c6" stroke="#35424f" stroke-width="0.8"/><path d="M-0.3 -0.9 C-1.3 0.2 -1.4 1.4 -0.8 2.2" stroke="#f4f8fb" stroke-width="1.1" fill="none"/></g><g transform="translate(7.8,14.9) scale(1)"><path d="M0.6 -3.9 C2.3 -1.4 2.7 0.2 2.7 1.3 C2.7 2.8 1.5 3.8 0 3.8 C-1.5 3.8 -2.7 2.8 -2.7 1.3 C-2.7 -0.2 -1.4 -1.8 0.6 -3.9 Z" fill="#a9b7c6" stroke="#35424f" stroke-width="0.8"/><path d="M-0.3 -0.9 C-1.3 0.2 -1.4 1.4 -0.8 2.2" stroke="#f4f8fb" stroke-width="1.1" fill="none"/></g></svg>
<span class="t" style="left:51.20px;top:-0.65px;font-size:14px;line-height:18px;color:#111;transform:scaleX(0.9681);">Stage 5 - Water</span>
</div>
<div class="tree-row" style="left:25.9px;top:60.8px;width:140px;height:20px;">
<div style="left:6.8px;top:4.8px;width:10.8px;height:10.4px;box-sizing:border-box;border:1.4px solid #878a8f;background:linear-gradient(135deg,#fff 40%,#dfe1e4);border-radius:2px"></div><div style="left:8.8px;top:9.4px;width:6.8px;height:1.3px;background:#3551a8;"></div><div style="left:11.55px;top:6.6px;width:1.3px;height:6.8px;background:#3551a8;"></div>
<div style="left:18px;top:9.5px;width:9px;height:1px;background:transparent;background-image:repeating-linear-gradient(90deg,#8a8a8a 0 1px,transparent 1px 2px)"></div>
<svg style="left:26px;top:0px" width="19" height="20" viewBox="0 0 19 20"><g transform="translate(3.9,5.6) scale(1)"><path d="M0.6 -3.9 C2.3 -1.4 2.7 0.2 2.7 1.3 C2.7 2.8 1.5 3.8 0 3.8 C-1.5 3.8 -2.7 2.8 -2.7 1.3 C-2.7 -0.2 -1.4 -1.8 0.6 -3.9 Z" fill="#a9b7c6" stroke="#35424f" stroke-width="0.8"/><path d="M-0.3 -0.9 C-1.3 0.2 -1.4 1.4 -0.8 2.2" stroke="#f4f8fb" stroke-width="1.1" fill="none"/></g><g transform="translate(15.2,8) scale(1)"><path d="M0.6 -3.9 C2.3 -1.4 2.7 0.2 2.7 1.3 C2.7 2.8 1.5 3.8 0 3.8 C-1.5 3.8 -2.7 2.8 -2.7 1.3 C-2.7 -0.2 -1.4 -1.8 0.6 -3.9 Z" fill="#a9b7c6" stroke="#35424f" stroke-width="0.8"/><path d="M-0.3 -0.9 C-1.3 0.2 -1.4 1.4 -0.8 2.2" stroke="#f4f8fb" stroke-width="1.1" fill="none"/></g><g transform="translate(7.8,14.9) scale(1)"><path d="M0.6 -3.9 C2.3 -1.4 2.7 0.2 2.7 1.3 C2.7 2.8 1.5 3.8 0 3.8 C-1.5 3.8 -2.7 2.8 -2.7 1.3 C-2.7 -0.2 -1.4 -1.8 0.6 -3.9 Z" fill="#a9b7c6" stroke="#35424f" stroke-width="0.8"/><path d="M-0.3 -0.9 C-1.3 0.2 -1.4 1.4 -0.8 2.2" stroke="#f4f8fb" stroke-width="1.1" fill="none"/></g></svg>
<span class="t" style="left:51.20px;top:-0.65px;font-size:14px;line-height:18px;color:#111;transform:scaleX(0.9681);">Stage 4 - Water</span>
</div>
<div class="tree-row" style="left:25.9px;top:80.8px;width:140px;height:20px;">
<div style="left:6.8px;top:4.8px;width:10.8px;height:10.4px;box-sizing:border-box;border:1.4px solid #878a8f;background:linear-gradient(135deg,#fff 40%,#dfe1e4);border-radius:2px"></div><div style="left:8.8px;top:9.4px;width:6.8px;height:1.3px;background:#3551a8;"></div><div style="left:11.55px;top:6.6px;width:1.3px;height:6.8px;background:#3551a8;"></div>
<div style="left:18px;top:9.5px;width:9px;height:1px;background:transparent;background-image:repeating-linear-gradient(90deg,#8a8a8a 0 1px,transparent 1px 2px)"></div>
<svg style="left:26px;top:0px" width="19" height="20" viewBox="0 0 19 20"><g transform="translate(3.9,5.6) scale(1)"><path d="M0.6 -3.9 C2.3 -1.4 2.7 0.2 2.7 1.3 C2.7 2.8 1.5 3.8 0 3.8 C-1.5 3.8 -2.7 2.8 -2.7 1.3 C-2.7 -0.2 -1.4 -1.8 0.6 -3.9 Z" fill="#a9b7c6" stroke="#35424f" stroke-width="0.8"/><path d="M-0.3 -0.9 C-1.3 0.2 -1.4 1.4 -0.8 2.2" stroke="#f4f8fb" stroke-width="1.1" fill="none"/></g><g transform="translate(15.2,8) scale(1)"><path d="M0.6 -3.9 C2.3 -1.4 2.7 0.2 2.7 1.3 C2.7 2.8 1.5 3.8 0 3.8 C-1.5 3.8 -2.7 2.8 -2.7 1.3 C-2.7 -0.2 -1.4 -1.8 0.6 -3.9 Z" fill="#a9b7c6" stroke="#35424f" stroke-width="0.8"/><path d="M-0.3 -0.9 C-1.3 0.2 -1.4 1.4 -0.8 2.2" stroke="#f4f8fb" stroke-width="1.1" fill="none"/></g><g transform="translate(7.8,14.9) scale(1)"><path d="M0.6 -3.9 C2.3 -1.4 2.7 0.2 2.7 1.3 C2.7 2.8 1.5 3.8 0 3.8 C-1.5 3.8 -2.7 2.8 -2.7 1.3 C-2.7 -0.2 -1.4 -1.8 0.6 -3.9 Z" fill="#a9b7c6" stroke="#35424f" stroke-width="0.8"/><path d="M-0.3 -0.9 C-1.3 0.2 -1.4 1.4 -0.8 2.2" stroke="#f4f8fb" stroke-width="1.1" fill="none"/></g></svg>
<span class="t" style="left:51.20px;top:-0.65px;font-size:14px;line-height:18px;color:#111;transform:scaleX(0.9681);">Stage 3 - Water</span>
</div>
<div class="tree-row" style="left:25.9px;top:100.8px;width:140px;height:20px;">
<div style="left:6.8px;top:4.8px;width:10.8px;height:10.4px;box-sizing:border-box;border:1.4px solid #878a8f;background:linear-gradient(135deg,#fff 40%,#dfe1e4);border-radius:2px"></div><div style="left:8.8px;top:9.4px;width:6.8px;height:1.3px;background:#3551a8;"></div><div style="left:11.55px;top:6.6px;width:1.3px;height:6.8px;background:#3551a8;"></div>
<div style="left:18px;top:9.5px;width:9px;height:1px;background:transparent;background-image:repeating-linear-gradient(90deg,#8a8a8a 0 1px,transparent 1px 2px)"></div>
<svg style="left:26px;top:0px" width="19" height="20" viewBox="0 0 19 20"><g transform="translate(3.9,5.6) scale(1)"><path d="M0.6 -3.9 C2.3 -1.4 2.7 0.2 2.7 1.3 C2.7 2.8 1.5 3.8 0 3.8 C-1.5 3.8 -2.7 2.8 -2.7 1.3 C-2.7 -0.2 -1.4 -1.8 0.6 -3.9 Z" fill="#a9b7c6" stroke="#35424f" stroke-width="0.8"/><path d="M-0.3 -0.9 C-1.3 0.2 -1.4 1.4 -0.8 2.2" stroke="#f4f8fb" stroke-width="1.1" fill="none"/></g><g transform="translate(15.2,8) scale(1)"><path d="M0.6 -3.9 C2.3 -1.4 2.7 0.2 2.7 1.3 C2.7 2.8 1.5 3.8 0 3.8 C-1.5 3.8 -2.7 2.8 -2.7 1.3 C-2.7 -0.2 -1.4 -1.8 0.6 -3.9 Z" fill="#a9b7c6" stroke="#35424f" stroke-width="0.8"/><path d="M-0.3 -0.9 C-1.3 0.2 -1.4 1.4 -0.8 2.2" stroke="#f4f8fb" stroke-width="1.1" fill="none"/></g><g transform="translate(7.8,14.9) scale(1)"><path d="M0.6 -3.9 C2.3 -1.4 2.7 0.2 2.7 1.3 C2.7 2.8 1.5 3.8 0 3.8 C-1.5 3.8 -2.7 2.8 -2.7 1.3 C-2.7 -0.2 -1.4 -1.8 0.6 -3.9 Z" fill="#a9b7c6" stroke="#35424f" stroke-width="0.8"/><path d="M-0.3 -0.9 C-1.3 0.2 -1.4 1.4 -0.8 2.2" stroke="#f4f8fb" stroke-width="1.1" fill="none"/></g></svg>
<span class="t" style="left:51.20px;top:-0.65px;font-size:14px;line-height:18px;color:#111;transform:scaleX(0.975);"><span style="letter-spacing:-1.7px">XXX</span> Stage 2 - Wa</span>
</div>
<div class="tree-row" style="left:25.9px;top:120.8px;width:140px;height:20px;">
<div style="left:6.8px;top:4.8px;width:10.8px;height:10.4px;box-sizing:border-box;border:1.4px solid #878a8f;background:linear-gradient(135deg,#fff 40%,#dfe1e4);border-radius:2px"></div><div style="left:8.8px;top:9.4px;width:6.8px;height:1.3px;background:#3551a8;"></div><div style="left:11.55px;top:6.6px;width:1.3px;height:6.8px;background:#3551a8;"></div>
<div style="left:18px;top:9.5px;width:9px;height:1px;background:transparent;background-image:repeating-linear-gradient(90deg,#8a8a8a 0 1px,transparent 1px 2px)"></div>
<svg style="left:26px;top:0px" width="19" height="20" viewBox="0 0 19 20"><g transform="translate(3.9,5.6) scale(1)"><path d="M0.6 -3.9 C2.3 -1.4 2.7 0.2 2.7 1.3 C2.7 2.8 1.5 3.8 0 3.8 C-1.5 3.8 -2.7 2.8 -2.7 1.3 C-2.7 -0.2 -1.4 -1.8 0.6 -3.9 Z" fill="#a9b7c6" stroke="#35424f" stroke-width="0.8"/><path d="M-0.3 -0.9 C-1.3 0.2 -1.4 1.4 -0.8 2.2" stroke="#f4f8fb" stroke-width="1.1" fill="none"/></g><g transform="translate(15.2,8) scale(1)"><path d="M0.6 -3.9 C2.3 -1.4 2.7 0.2 2.7 1.3 C2.7 2.8 1.5 3.8 0 3.8 C-1.5 3.8 -2.7 2.8 -2.7 1.3 C-2.7 -0.2 -1.4 -1.8 0.6 -3.9 Z" fill="#a9b7c6" stroke="#35424f" stroke-width="0.8"/><path d="M-0.3 -0.9 C-1.3 0.2 -1.4 1.4 -0.8 2.2" stroke="#f4f8fb" stroke-width="1.1" fill="none"/></g><g transform="translate(7.8,14.9) scale(1)"><path d="M0.6 -3.9 C2.3 -1.4 2.7 0.2 2.7 1.3 C2.7 2.8 1.5 3.8 0 3.8 C-1.5 3.8 -2.7 2.8 -2.7 1.3 C-2.7 -0.2 -1.4 -1.8 0.6 -3.9 Z" fill="#a9b7c6" stroke="#35424f" stroke-width="0.8"/><path d="M-0.3 -0.9 C-1.3 0.2 -1.4 1.4 -0.8 2.2" stroke="#f4f8fb" stroke-width="1.1" fill="none"/></g></svg>
<span class="t" style="left:51.20px;top:-0.65px;font-size:14px;line-height:18px;color:#111;transform:scaleX(0.9319);">DEF Stage 1 - W</span>
</div>
<div class="tree-row" style="left:25.9px;top:140.8px;width:140px;height:20px;">
<div style="left:6.8px;top:4.8px;width:10.8px;height:10.4px;box-sizing:border-box;border:1.4px solid #878a8f;background:linear-gradient(135deg,#fff 40%,#dfe1e4);border-radius:2px"></div><div style="left:8.8px;top:9.4px;width:6.8px;height:1.3px;background:#3551a8;"></div><div style="left:11.55px;top:6.6px;width:1.3px;height:6.8px;background:#3551a8;"></div>
<div style="left:18px;top:9.5px;width:9px;height:1px;background:transparent;background-image:repeating-linear-gradient(90deg,#8a8a8a 0 1px,transparent 1px 2px)"></div>
<svg style="left:26px;top:0px" width="19" height="20" viewBox="0 0 19 20"><g transform="translate(3.9,5.6) scale(1)"><path d="M0.6 -3.9 C2.3 -1.4 2.7 0.2 2.7 1.3 C2.7 2.8 1.5 3.8 0 3.8 C-1.5 3.8 -2.7 2.8 -2.7 1.3 C-2.7 -0.2 -1.4 -1.8 0.6 -3.9 Z" fill="#a9b7c6" stroke="#35424f" stroke-width="0.8"/><path d="M-0.3 -0.9 C-1.3 0.2 -1.4 1.4 -0.8 2.2" stroke="#f4f8fb" stroke-width="1.1" fill="none"/></g><g transform="translate(15.2,8) scale(1)"><path d="M0.6 -3.9 C2.3 -1.4 2.7 0.2 2.7 1.3 C2.7 2.8 1.5 3.8 0 3.8 C-1.5 3.8 -2.7 2.8 -2.7 1.3 C-2.7 -0.2 -1.4 -1.8 0.6 -3.9 Z" fill="#a9b7c6" stroke="#35424f" stroke-width="0.8"/><path d="M-0.3 -0.9 C-1.3 0.2 -1.4 1.4 -0.8 2.2" stroke="#f4f8fb" stroke-width="1.1" fill="none"/></g><g transform="translate(7.8,14.9) scale(1)"><path d="M0.6 -3.9 C2.3 -1.4 2.7 0.2 2.7 1.3 C2.7 2.8 1.5 3.8 0 3.8 C-1.5 3.8 -2.7 2.8 -2.7 1.3 C-2.7 -0.2 -1.4 -1.8 0.6 -3.9 Z" fill="#a9b7c6" stroke="#35424f" stroke-width="0.8"/><path d="M-0.3 -0.9 C-1.3 0.2 -1.4 1.4 -0.8 2.2" stroke="#f4f8fb" stroke-width="1.1" fill="none"/></g></svg>
<span class="t" style="left:51.20px;top:-0.65px;font-size:14px;line-height:18px;color:#111;transform:scaleX(0.9611);">Stage 7A - Dry</span>
</div>
<div class="tree-row" style="left:25.9px;top:160.8px;width:140px;height:20px;">
<div style="left:6.8px;top:4.8px;width:10.8px;height:10.4px;box-sizing:border-box;border:1.4px solid #878a8f;background:linear-gradient(135deg,#fff 40%,#dfe1e4);border-radius:2px"></div><div style="left:8.8px;top:9.4px;width:6.8px;height:1.3px;background:#3551a8;"></div><div style="left:11.55px;top:6.6px;width:1.3px;height:6.8px;background:#3551a8;"></div>
<div style="left:18px;top:9.5px;width:9px;height:1px;background:transparent;background-image:repeating-linear-gradient(90deg,#8a8a8a 0 1px,transparent 1px 2px)"></div>
<svg style="left:28px;top:0.6px" width="14" height="18.2" viewBox="0 0 14 18.2"><path d="M1.6 13.5 L1.6 5.4 C1.6 -1.2 12.4 -1.2 12.4 5.4 L12.4 13.5 Z" fill="url(#bc)"/>
<path d="M1.2 12.6 C4 14 10 14 12.8 12.6 L13.6 15.6 C10 18 4 18 0.4 15.6 Z" fill="#d61e0e"/>
<path d="M0.4 15.6 C4 18 10 18 13.6 15.6 L13.4 16.6 C10 18.8 4 18.8 0.6 16.6 Z" fill="#9a0e06"/>
<path d="M4.6 9.5 L4.6 4.6 C4.8 3 5.8 2 7 1.8" stroke="#ff8a70" stroke-width="1.1" fill="none" opacity="0.8"/>
<path d="M7.6 8 L10 8 L10 11 L6.2 11" stroke="#c21a0c" stroke-width="0.9" fill="none" opacity="0.7"/></svg>
<span class="t" style="left:51.20px;top:-0.65px;font-size:14px;line-height:18px;color:#111;transform:scaleX(1.0129);">K301 Topsides</span>
</div>
<div class="tree-row" style="left:25.9px;top:180.8px;width:140px;height:20px;">
<div style="left:6.8px;top:4.8px;width:10.8px;height:10.4px;box-sizing:border-box;border:1.4px solid #878a8f;background:linear-gradient(135deg,#fff 40%,#dfe1e4);border-radius:2px"></div><div style="left:8.8px;top:9.4px;width:6.8px;height:1.3px;background:#3551a8;"></div><div style="left:11.55px;top:6.6px;width:1.3px;height:6.8px;background:#3551a8;"></div>
<div style="left:18px;top:9.5px;width:9px;height:1px;background:transparent;background-image:repeating-linear-gradient(90deg,#8a8a8a 0 1px,transparent 1px 2px)"></div>
<svg style="left:28.4px;top:3.8px" width="17" height="12.6" viewBox="0 0 17 12.6"><defs><linearGradient id="mt" x1="0" y1="0" x2="0" y2="1"><stop offset="0" stop-color="#8fa898"/><stop offset="0.45" stop-color="#5f7a6a"/><stop offset="1" stop-color="#3f5548"/></linearGradient></defs>
<rect x="7" y="0" width="2.2" height="2" fill="#6f8878"/>
<rect x="0.3" y="1.2" width="16.4" height="10" rx="3.6" fill="url(#mt)"/>
<path d="M3.2 3.6 L9.6 3.6 M3.2 5.8 L9.6 5.8 M3.2 8 L9.6 8" stroke="#405448" stroke-width="0.8"/>
<rect x="10.6" y="3.6" width="4.6" height="4.2" rx="0.8" fill="#b9c6dc"/>
<path d="M3.5 11.2 L13.5 11.2 L12.5 12.4 L4.5 12.4 Z" fill="#4a5a50"/></svg>
<span class="t" style="left:51.20px;top:-0.65px;font-size:14px;line-height:18px;color:#111;transform:scaleX(0.9501);">294  ( 28059 )</span>
</div>
<div class="tree-row" style="left:25.9px;top:200.8px;width:140px;height:20px;">
<div style="left:6.8px;top:4.8px;width:10.8px;height:10.4px;box-sizing:border-box;border:1.4px solid #878a8f;background:linear-gradient(135deg,#fff 40%,#dfe1e4);border-radius:2px"></div><div style="left:8.8px;top:9.4px;width:6.8px;height:1.3px;background:#3551a8;"></div><div style="left:11.55px;top:6.6px;width:1.3px;height:6.8px;background:#3551a8;"></div>
<div style="left:18px;top:9.5px;width:9px;height:1px;background:transparent;background-image:repeating-linear-gradient(90deg,#8a8a8a 0 1px,transparent 1px 2px)"></div>
<svg style="left:28.4px;top:3.8px" width="17" height="12.6" viewBox="0 0 17 12.6"><rect x="7" y="0" width="2.2" height="2" fill="#6f8878"/>
<rect x="0.3" y="1.2" width="16.4" height="10" rx="3.6" fill="url(#mt)"/>
<path d="M3.2 3.6 L9.6 3.6 M3.2 5.8 L9.6 5.8 M3.2 8 L9.6 8" stroke="#405448" stroke-width="0.8"/>
<rect x="10.6" y="3.6" width="4.6" height="4.2" rx="0.8" fill="#b9c6dc"/>
<path d="M3.5 11.2 L13.5 11.2 L12.5 12.4 L4.5 12.4 Z" fill="#4a5a50"/></svg>
<span class="t" style="left:51.20px;top:-0.65px;font-size:14px;line-height:18px;color:#111;transform:scaleX(1.0077);">Transformer</span>
</div>
<div class="tree-row" style="left:25.9px;top:220.8px;width:140px;height:20px;">
<div style="left:6.8px;top:4.8px;width:10.8px;height:10.4px;box-sizing:border-box;border:1.4px solid #878a8f;background:linear-gradient(135deg,#fff 40%,#dfe1e4);border-radius:2px"></div><div style="left:8.8px;top:9.4px;width:6.8px;height:1.3px;background:#3551a8;"></div><div style="left:11.55px;top:6.6px;width:1.3px;height:6.8px;background:#3551a8;"></div>
<div style="left:18px;top:9.5px;width:9px;height:1px;background:transparent;background-image:repeating-linear-gradient(90deg,#8a8a8a 0 1px,transparent 1px 2px)"></div>
<svg style="left:25px;top:0px" width="20.5" height="20" viewBox="0 0 20.5 20"><path d="M9.5 0 L17 0 Q20.5 0 20.5 3.5 L20.5 20 L17.8 20 L17.8 4 Q17.8 1.6 16 1.6 L9.5 1.6 Z" fill="#171011"/>
<path d="M0 1.6 L16 1.6 Q17.8 1.6 17.8 4 L17.8 20 L15.3 20 L15.3 4.4 L0 4.4 Z" fill="#c8a8af"/>
<path d="M0.5 2.3 L15.5 2.3" stroke="#e3cdd1" stroke-width="0.8"/>
<path d="M0 4.2 L15.3 4.2 L15.3 20 L13.6 20 L13.6 7 L1.2 7 Z" fill="#1d1416"/>
<rect x="13.6" y="8.5" width="1.7" height="11.5" fill="#8d767b"/>
<text x="6.8" y="18.2" font-family="Liberation Sans, sans-serif" font-weight="bold" font-size="12.5" fill="#3b58b8" stroke="#d5dcf4" stroke-width="0.3" paint-order="stroke" textLength="5.4" lengthAdjust="spacingAndGlyphs">3</text></svg>
<span class="t" style="left:51.20px;top:-0.65px;font-size:14px;line-height:18px;color:#111;transform:scaleX(1.0053);">Left side pipe</span>
</div>
<div class="tree-row" style="left:25.9px;top:240.8px;width:140px;height:20px;">
<div style="left:6.8px;top:4.8px;width:10.8px;height:10.4px;box-sizing:border-box;border:1.4px solid #878a8f;background:linear-gradient(135deg,#fff 40%,#dfe1e4);border-radius:2px"></div><div style="left:8.8px;top:9.4px;width:6.8px;height:1.3px;background:#3551a8;"></div><div style="left:11.55px;top:6.6px;width:1.3px;height:6.8px;background:#3551a8;"></div>
<div style="left:18px;top:9.5px;width:9px;height:1px;background:transparent;background-image:repeating-linear-gradient(90deg,#8a8a8a 0 1px,transparent 1px 2px)"></div>
<svg style="left:25px;top:0px" width="20.5" height="20" viewBox="0 0 20.5 20"><path d="M9.5 0 L17 0 Q20.5 0 20.5 3.5 L20.5 20 L17.8 20 L17.8 4 Q17.8 1.6 16 1.6 L9.5 1.6 Z" fill="#171011"/>
<path d="M0 1.6 L16 1.6 Q17.8 1.6 17.8 4 L17.8 20 L15.3 20 L15.3 4.4 L0 4.4 Z" fill="#c8a8af"/>
<path d="M0.5 2.3 L15.5 2.3" stroke="#e3cdd1" stroke-width="0.8"/>
<path d="M0 4.2 L15.3 4.2 L15.3 20 L13.6 20 L13.6 7 L1.2 7 Z" fill="#1d1416"/>
<rect x="13.6" y="8.5" width="1.7" height="11.5" fill="#8d767b"/>
<text x="6.8" y="18.2" font-family="Liberation Sans, sans-serif" font-weight="bold" font-size="12.5" fill="#3b58b8" stroke="#d5dcf4" stroke-width="0.3" paint-order="stroke" textLength="5.4" lengthAdjust="spacingAndGlyphs">3</text></svg>
<span class="t" style="left:51.20px;top:-0.65px;font-size:14px;line-height:18px;color:#111;transform:scaleX(0.9706);">Pipe Section</span>
</div>
<div class="tree-row" style="left:25.9px;top:260.8px;width:140px;height:20px;">
<div style="left:6.8px;top:4.8px;width:10.8px;height:10.4px;box-sizing:border-box;border:1.4px solid #878a8f;background:linear-gradient(135deg,#fff 40%,#dfe1e4);border-radius:2px"></div><div style="left:8.8px;top:9.4px;width:6.8px;height:1.3px;background:#3551a8;"></div><div style="left:11.55px;top:6.6px;width:1.3px;height:6.8px;background:#3551a8;"></div>
<div style="left:18px;top:9.5px;width:9px;height:1px;background:transparent;background-image:repeating-linear-gradient(90deg,#8a8a8a 0 1px,transparent 1px 2px)"></div>
<svg style="left:25px;top:0px" width="20.5" height="20" viewBox="0 0 20.5 20"><path d="M9.5 0 L17 0 Q20.5 0 20.5 3.5 L20.5 20 L17.8 20 L17.8 4 Q17.8 1.6 16 1.6 L9.5 1.6 Z" fill="#171011"/>
<path d="M0 1.6 L16 1.6 Q17.8 1.6 17.8 4 L17.8 20 L15.3 20 L15.3 4.4 L0 4.4 Z" fill="#c8a8af"/>
<path d="M0.5 2.3 L15.5 2.3" stroke="#e3cdd1" stroke-width="0.8"/>
<path d="M0 4.2 L15.3 4.2 L15.3 20 L13.6 20 L13.6 7 L1.2 7 Z" fill="#1d1416"/>
<rect x="13.6" y="8.5" width="1.7" height="11.5" fill="#8d767b"/>
<text x="6.8" y="18.2" font-family="Liberation Sans, sans-serif" font-weight="bold" font-size="12.5" fill="#3b58b8" stroke="#d5dcf4" stroke-width="0.3" paint-order="stroke" textLength="5.4" lengthAdjust="spacingAndGlyphs">3</text></svg>
<span class="t" style="left:51.20px;top:-0.65px;font-size:14px;line-height:18px;color:#111;transform:scaleX(0.9706);">Pipe Section</span>
</div>
<div class="tree-row" style="left:25.9px;top:280.8px;width:140px;height:20px;">
<div style="left:13px;top:9.5px;width:14px;height:1px;background:transparent;background-image:repeating-linear-gradient(90deg,#8a8a8a 0 1px,transparent 1px 2px)"></div>
<svg style="left:25px;top:0px" width="20.5" height="20" viewBox="0 0 20.5 20"><path d="M9.5 0 L17 0 Q20.5 0 20.5 3.5 L20.5 20 L17.8 20 L17.8 4 Q17.8 1.6 16 1.6 L9.5 1.6 Z" fill="#171011"/>
<path d="M0 1.6 L16 1.6 Q17.8 1.6 17.8 4 L17.8 20 L15.3 20 L15.3 4.4 L0 4.4 Z" fill="#c8a8af"/>
<path d="M0.5 2.3 L15.5 2.3" stroke="#e3cdd1" stroke-width="0.8"/>
<path d="M0 4.2 L15.3 4.2 L15.3 20 L13.6 20 L13.6 7 L1.2 7 Z" fill="#1d1416"/>
<rect x="13.6" y="8.5" width="1.7" height="11.5" fill="#8d767b"/>
<text x="6.8" y="18.2" font-family="Liberation Sans, sans-serif" font-weight="bold" font-size="12.5" fill="#3b58b8" stroke="#d5dcf4" stroke-width="0.3" paint-order="stroke" textLength="5.4" lengthAdjust="spacingAndGlyphs">3</text></svg>
<span class="t" style="left:51.20px;top:-0.65px;font-size:14px;line-height:18px;color:#111;transform:scaleX(0.9706);">Pipe Section</span>
</div>
<div class="tree-row" style="left:25.9px;top:300.8px;width:140px;height:20px;">
<div style="left:13px;top:9.5px;width:14px;height:1px;background:transparent;background-image:repeating-linear-gradient(90deg,#8a8a8a 0 1px,transparent 1px 2px)"></div>
<svg style="left:25px;top:0px" width="20.5" height="20" viewBox="0 0 20.5 20"><path d="M9.5 0 L17 0 Q20.5 0 20.5 3.5 L20.5 20 L17.8 20 L17.8 4 Q17.8 1.6 16 1.6 L9.5 1.6 Z" fill="#171011"/>
<path d="M0 1.6 L16 1.6 Q17.8 1.6 17.8 4 L17.8 20 L15.3 20 L15.3 4.4 L0 4.4 Z" fill="#c8a8af"/>
<path d="M0.5 2.3 L15.5 2.3" stroke="#e3cdd1" stroke-width="0.8"/>
<path d="M0 4.2 L15.3 4.2 L15.3 20 L13.6 20 L13.6 7 L1.2 7 Z" fill="#1d1416"/>
<rect x="13.6" y="8.5" width="1.7" height="11.5" fill="#8d767b"/>
<text x="6.8" y="18.2" font-family="Liberation Sans, sans-serif" font-weight="bold" font-size="12.5" fill="#3b58b8" stroke="#d5dcf4" stroke-width="0.3" paint-order="stroke" textLength="5.4" lengthAdjust="spacingAndGlyphs">3</text></svg>
<span class="t" style="left:51.20px;top:-0.65px;font-size:14px;line-height:18px;color:#111;transform:scaleX(0.9706);">Pipe Section</span>
</div>
<div class="tree-row" style="left:25.9px;top:320.8px;width:140px;height:20px;">
<div style="left:6.8px;top:4.8px;width:10.8px;height:10.4px;box-sizing:border-box;border:1.4px solid #878a8f;background:linear-gradient(135deg,#fff 40%,#dfe1e4);border-radius:2px"></div><div style="left:8.8px;top:9.4px;width:6.8px;height:1.3px;background:#3551a8;"></div><div style="left:11.55px;top:6.6px;width:1.3px;height:6.8px;background:#3551a8;"></div>
<div style="left:18px;top:9.5px;width:9px;height:1px;background:transparent;background-image:repeating-linear-gradient(90deg,#8a8a8a 0 1px,transparent 1px 2px)"></div>
<svg style="left:25px;top:0px" width="20.5" height="20" viewBox="0 0 20.5 20"><path d="M9.5 0 L17 0 Q20.5 0 20.5 3.5 L20.5 20 L17.8 20 L17.8 4 Q17.8 1.6 16 1.6 L9.5 1.6 Z" fill="#171011"/>
<path d="M0 1.6 L16 1.6 Q17.8 1.6 17.8 4 L17.8 20 L15.3 20 L15.3 4.4 L0 4.4 Z" fill="#c8a8af"/>
<path d="M0.5 2.3 L15.5 2.3" stroke="#e3cdd1" stroke-width="0.8"/>
<path d="M0 4.2 L15.3 4.2 L15.3 20 L13.6 20 L13.6 7 L1.2 7 Z" fill="#1d1416"/>
<rect x="13.6" y="8.5" width="1.7" height="11.5" fill="#8d767b"/>
<text x="6.8" y="18.2" font-family="Liberation Sans, sans-serif" font-weight="bold" font-size="12.5" fill="#3b58b8" stroke="#d5dcf4" stroke-width="0.3" paint-order="stroke" textLength="5.4" lengthAdjust="spacingAndGlyphs">3</text></svg>
<span class="t" style="left:51.20px;top:-0.65px;font-size:14px;line-height:18px;color:#111;transform:scaleX(0.9706);">Pipe Section</span>
</div>
<div class="tree-row" style="left:25.9px;top:340.8px;width:140px;height:20px;">
<div style="left:13px;top:9.5px;width:14px;height:1px;background:transparent;background-image:repeating-linear-gradient(90deg,#8a8a8a 0 1px,transparent 1px 2px)"></div>
<svg style="left:25px;top:0px" width="20.5" height="20" viewBox="0 0 20.5 20"><path d="M9.5 0 L17 0 Q20.5 0 20.5 3.5 L20.5 20 L17.8 20 L17.8 4 Q17.8 1.6 16 1.6 L9.5 1.6 Z" fill="#171011"/>
<path d="M0 1.6 L16 1.6 Q17.8 1.6 17.8 4 L17.8 20 L15.3 20 L15.3 4.4 L0 4.4 Z" fill="#c8a8af"/>
<path d="M0.5 2.3 L15.5 2.3" stroke="#e3cdd1" stroke-width="0.8"/>
<path d="M0 4.2 L15.3 4.2 L15.3 20 L13.6 20 L13.6 7 L1.2 7 Z" fill="#1d1416"/>
<rect x="13.6" y="8.5" width="1.7" height="11.5" fill="#8d767b"/>
<text x="6.8" y="18.2" font-family="Liberation Sans, sans-serif" font-weight="bold" font-size="12.5" fill="#3b58b8" stroke="#d5dcf4" stroke-width="0.3" paint-order="stroke" textLength="5.4" lengthAdjust="spacingAndGlyphs">3</text></svg>
<span class="t" style="left:51.20px;top:-0.65px;font-size:14px;line-height:18px;color:#111;transform:scaleX(0.9706);">Pipe Section</span>
</div>
<div class="tree-row" style="left:25.9px;top:360.8px;width:140px;height:20px;">
<div style="left:13px;top:9.5px;width:14px;height:1px;background:transparent;background-image:repeating-linear-gradient(90deg,#8a8a8a 0 1px,transparent 1px 2px)"></div>
<svg style="left:25px;top:0px" width="20.5" height="20" viewBox="0 0 20.5 20"><path d="M9.5 0 L17 0 Q20.5 0 20.5 3.5 L20.5 20 L17.8 20 L17.8 4 Q17.8 1.6 16 1.6 L9.5 1.6 Z" fill="#171011"/>
<path d="M0 1.6 L16 1.6 Q17.8 1.6 17.8 4 L17.8 20 L15.3 20 L15.3 4.4 L0 4.4 Z" fill="#c8a8af"/>
<path d="M0.5 2.3 L15.5 2.3" stroke="#e3cdd1" stroke-width="0.8"/>
<path d="M0 4.2 L15.3 4.2 L15.3 20 L13.6 20 L13.6 7 L1.2 7 Z" fill="#1d1416"/>
<rect x="13.6" y="8.5" width="1.7" height="11.5" fill="#8d767b"/>
<text x="6.8" y="18.2" font-family="Liberation Sans, sans-serif" font-weight="bold" font-size="12.5" fill="#3b58b8" stroke="#d5dcf4" stroke-width="0.3" paint-order="stroke" textLength="5.4" lengthAdjust="spacingAndGlyphs">3</text></svg>
<span class="t" style="left:51.20px;top:-0.65px;font-size:14px;line-height:18px;color:#111;transform:scaleX(0.9706);">Pipe Section</span>
</div>
<div class="tree-row" style="left:25.9px;top:380.8px;width:140px;height:20px;">
<div style="left:13px;top:9.5px;width:14px;height:1px;background:transparent;background-image:repeating-linear-gradient(90deg,#8a8a8a 0 1px,transparent 1px 2px)"></div>
<svg style="left:25px;top:0px" width="20.5" height="20" viewBox="0 0 20.5 20"><path d="M9.5 0 L17 0 Q20.5 0 20.5 3.5 L20.5 20 L17.8 20 L17.8 4 Q17.8 1.6 16 1.6 L9.5 1.6 Z" fill="#171011"/>
<path d="M0 1.6 L16 1.6 Q17.8 1.6 17.8 4 L17.8 20 L15.3 20 L15.3 4.4 L0 4.4 Z" fill="#c8a8af"/>
<path d="M0.5 2.3 L15.5 2.3" stroke="#e3cdd1" stroke-width="0.8"/>
<path d="M0 4.2 L15.3 4.2 L15.3 20 L13.6 20 L13.6 7 L1.2 7 Z" fill="#1d1416"/>
<rect x="13.6" y="8.5" width="1.7" height="11.5" fill="#8d767b"/>
<text x="6.8" y="18.2" font-family="Liberation Sans, sans-serif" font-weight="bold" font-size="12.5" fill="#3b58b8" stroke="#d5dcf4" stroke-width="0.3" paint-order="stroke" textLength="5.4" lengthAdjust="spacingAndGlyphs">3</text></svg>
<span class="t" style="left:51.20px;top:-0.65px;font-size:14px;line-height:18px;color:#111;transform:scaleX(0.9706);">Pipe Section</span>
</div>
<div class="tree-row" style="left:25.9px;top:400.8px;width:140px;height:20px;">
<div style="left:13px;top:9.5px;width:14px;height:1px;background:transparent;background-image:repeating-linear-gradient(90deg,#8a8a8a 0 1px,transparent 1px 2px)"></div>
<svg style="left:25px;top:0px" width="20.5" height="20" viewBox="0 0 20.5 20"><path d="M9.5 0 L17 0 Q20.5 0 20.5 3.5 L20.5 20 L17.8 20 L17.8 4 Q17.8 1.6 16 1.6 L9.5 1.6 Z" fill="#171011"/>
<path d="M0 1.6 L16 1.6 Q17.8 1.6 17.8 4 L17.8 20 L15.3 20 L15.3 4.4 L0 4.4 Z" fill="#c8a8af"/>
<path d="M0.5 2.3 L15.5 2.3" stroke="#e3cdd1" stroke-width="0.8"/>
<path d="M0 4.2 L15.3 4.2 L15.3 20 L13.6 20 L13.6 7 L1.2 7 Z" fill="#1d1416"/>
<rect x="13.6" y="8.5" width="1.7" height="11.5" fill="#8d767b"/>
<text x="6.8" y="18.2" font-family="Liberation Sans, sans-serif" font-weight="bold" font-size="12.5" fill="#3b58b8" stroke="#d5dcf4" stroke-width="0.3" paint-order="stroke" textLength="5.4" lengthAdjust="spacingAndGlyphs">3</text></svg>
<span class="t" style="left:51.20px;top:-0.65px;font-size:14px;line-height:18px;color:#111;transform:scaleX(0.9706);">Pipe Section</span>
</div>
<div class="tree-row" style="left:25.9px;top:420.8px;width:140px;height:20px;">
<div style="left:13px;top:9.5px;width:14px;height:1px;background:transparent;background-image:repeating-linear-gradient(90deg,#8a8a8a 0 1px,transparent 1px 2px)"></div>
<svg style="left:25px;top:0px" width="20.5" height="20" viewBox="0 0 20.5 20"><path d="M9.5 0 L17 0 Q20.5 0 20.5 3.5 L20.5 20 L17.8 20 L17.8 4 Q17.8 1.6 16 1.6 L9.5 1.6 Z" fill="#171011"/>
<path d="M0 1.6 L16 1.6 Q17.8 1.6 17.8 4 L17.8 20 L15.3 20 L15.3 4.4 L0 4.4 Z" fill="#c8a8af"/>
<path d="M0.5 2.3 L15.5 2.3" stroke="#e3cdd1" stroke-width="0.8"/>
<path d="M0 4.2 L15.3 4.2 L15.3 20 L13.6 20 L13.6 7 L1.2 7 Z" fill="#1d1416"/>
<rect x="13.6" y="8.5" width="1.7" height="11.5" fill="#8d767b"/>
<text x="6.8" y="18.2" font-family="Liberation Sans, sans-serif" font-weight="bold" font-size="12.5" fill="#3b58b8" stroke="#d5dcf4" stroke-width="0.3" paint-order="stroke" textLength="5.4" lengthAdjust="spacingAndGlyphs">3</text></svg>
<span class="t" style="left:51.20px;top:-0.65px;font-size:14px;line-height:18px;color:#111;transform:scaleX(0.9706);">Pipe Section</span>
</div>
<div class="tree-row" style="left:25.9px;top:440.8px;width:140px;height:20px;">
<div style="left:6.8px;top:4.8px;width:10.8px;height:10.4px;box-sizing:border-box;border:1.4px solid #878a8f;background:linear-gradient(135deg,#fff 40%,#dfe1e4);border-radius:2px"></div><div style="left:8.8px;top:9.4px;width:6.8px;height:1.3px;background:#3551a8;"></div><div style="left:11.55px;top:6.6px;width:1.3px;height:6.8px;background:#3551a8;"></div>
<div style="left:18px;top:9.5px;width:9px;height:1px;background:transparent;background-image:repeating-linear-gradient(90deg,#8a8a8a 0 1px,transparent 1px 2px)"></div>
<svg style="left:25px;top:0px" width="20.5" height="20" viewBox="0 0 20.5 20"><path d="M9.5 0 L17 0 Q20.5 0 20.5 3.5 L20.5 20 L17.8 20 L17.8 4 Q17.8 1.6 16 1.6 L9.5 1.6 Z" fill="#171011"/>
<path d="M0 1.6 L16 1.6 Q17.8 1.6 17.8 4 L17.8 20 L15.3 20 L15.3 4.4 L0 4.4 Z" fill="#c8a8af"/>
<path d="M0.5 2.3 L15.5 2.3" stroke="#e3cdd1" stroke-width="0.8"/>
<path d="M0 4.2 L15.3 4.2 L15.3 20 L13.6 20 L13.6 7 L1.2 7 Z" fill="#1d1416"/>
<rect x="13.6" y="8.5" width="1.7" height="11.5" fill="#8d767b"/>
<text x="6.8" y="18.2" font-family="Liberation Sans, sans-serif" font-weight="bold" font-size="12.5" fill="#3b58b8" stroke="#d5dcf4" stroke-width="0.3" paint-order="stroke" textLength="5.4" lengthAdjust="spacingAndGlyphs">3</text></svg>
<span class="t" style="left:51.20px;top:-0.65px;font-size:14px;line-height:18px;color:#111;transform:scaleX(0.9675);">Great Grand P</span>
</div>
<div class="tree-row" style="left:25.9px;top:460.8px;width:140px;height:20px;">
<div style="left:6.8px;top:4.8px;width:10.8px;height:10.4px;box-sizing:border-box;border:1.4px solid #878a8f;background:linear-gradient(135deg,#fff 40%,#dfe1e4);border-radius:2px"></div><div style="left:8.8px;top:9.4px;width:6.8px;height:1.3px;background:#3551a8;"></div><div style="left:11.55px;top:6.6px;width:1.3px;height:6.8px;background:#3551a8;"></div>
<div style="left:18px;top:9.5px;width:9px;height:1px;background:transparent;background-image:repeating-linear-gradient(90deg,#8a8a8a 0 1px,transparent 1px 2px)"></div>
<svg style="left:25.5px;top:-0.2px" width="20" height="19" viewBox="0 0 20 19"><path d="M4.2 4.6 L9.8 10 L15.6 4.6" stroke="#b9b9b9" stroke-width="0.9" fill="none"/>
<circle cx="4.2" cy="4.6" r="3.9" fill="#2f7df0"/><circle cx="3.2" cy="3.4" r="1.4" fill="#a4ccff"/>
<circle cx="15.6" cy="4.6" r="3.9" fill="#4cc828"/><circle cx="14.6" cy="3.4" r="1.4" fill="#b8f2a0"/>
<circle cx="9.9" cy="14.8" r="3.9" fill="#f79a10"/><circle cx="8.9" cy="13.6" r="1.4" fill="#ffe08a"/></svg>
<span class="t" style="left:51.20px;top:-0.65px;font-size:14px;line-height:18px;color:#111;transform:scaleX(0.9798);">Big tank in the</span>
</div>
<div class="tree-row" style="left:25.9px;top:480.8px;width:140px;height:20px;">
<div style="left:13px;top:9.5px;width:14px;height:1px;background:transparent;background-image:repeating-linear-gradient(90deg,#8a8a8a 0 1px,transparent 1px 2px)"></div>
<svg style="left:28.4px;top:3.8px" width="17" height="12.6" viewBox="0 0 17 12.6"><rect x="7" y="0" width="2.2" height="2" fill="#6f8878"/>
<rect x="0.3" y="1.2" width="16.4" height="10" rx="3.6" fill="url(#mt)"/>
<path d="M3.2 3.6 L9.6 3.6 M3.2 5.8 L9.6 5.8 M3.2 8 L9.6 8" stroke="#405448" stroke-width="0.8"/>
<rect x="10.6" y="3.6" width="4.6" height="4.2" rx="0.8" fill="#b9c6dc"/>
<path d="M3.5 11.2 L13.5 11.2 L12.5 12.4 L4.5 12.4 Z" fill="#4a5a50"/></svg>
<span class="t" style="left:51.20px;top:-0.65px;font-size:14px;line-height:18px;color:#111;transform:scaleX(1.0162);">DC motor DC</span>
</div>
<div class="tree-row" style="left:25.9px;top:500.8px;width:140px;height:20px;">
<div style="left:13px;top:9.5px;width:14px;height:1px;background:transparent;background-image:repeating-linear-gradient(90deg,#8a8a8a 0 1px,transparent 1px 2px)"></div>
<svg style="left:28.4px;top:3.8px" width="17" height="12.6" viewBox="0 0 17 12.6"><rect x="7" y="0" width="2.2" height="2" fill="#6f8878"/>
<rect x="0.3" y="1.2" width="16.4" height="10" rx="3.6" fill="url(#mt)"/>
<path d="M3.2 3.6 L9.6 3.6 M3.2 5.8 L9.6 5.8 M3.2 8 L9.6 8" stroke="#405448" stroke-width="0.8"/>
<rect x="10.6" y="3.6" width="4.6" height="4.2" rx="0.8" fill="#b9c6dc"/>
<path d="M3.5 11.2 L13.5 11.2 L12.5 12.4 L4.5 12.4 Z" fill="#4a5a50"/></svg>
<span class="t" style="left:51.20px;top:-0.65px;font-size:14px;line-height:18px;color:#111;transform:scaleX(1.0162);">DC motor DC</span>
</div>
<div class="tree-row" style="left:25.9px;top:520.8px;width:140px;height:20px;">
<div style="left:13px;top:9.5px;width:14px;height:1px;background:transparent;background-image:repeating-linear-gradient(90deg,#8a8a8a 0 1px,transparent 1px 2px)"></div>
<svg style="left:28.4px;top:3.8px" width="17" height="12.6" viewBox="0 0 17 12.6"><rect x="7" y="0" width="2.2" height="2" fill="#6f8878"/>
<rect x="0.3" y="1.2" width="16.4" height="10" rx="3.6" fill="url(#mt)"/>
<path d="M3.2 3.6 L9.6 3.6 M3.2 5.8 L9.6 5.8 M3.2 8 L9.6 8" stroke="#405448" stroke-width="0.8"/>
<rect x="10.6" y="3.6" width="4.6" height="4.2" rx="0.8" fill="#b9c6dc"/>
<path d="M3.5 11.2 L13.5 11.2 L12.5 12.4 L4.5 12.4 Z" fill="#4a5a50"/></svg>
<span class="t" style="left:51.20px;top:-0.65px;font-size:14px;line-height:18px;color:#111;transform:scaleX(1.0162);">DC motor DC</span>
</div>
<div class="tree-row" style="left:25.9px;top:540.8px;width:140px;height:20px;">
<div style="left:13px;top:9.5px;width:14px;height:1px;background:transparent;background-image:repeating-linear-gradient(90deg,#8a8a8a 0 1px,transparent 1px 2px)"></div>
<svg style="left:28.4px;top:3.8px" width="17" height="12.6" viewBox="0 0 17 12.6"><rect x="7" y="0" width="2.2" height="2" fill="#6f8878"/>
<rect x="0.3" y="1.2" width="16.4" height="10" rx="3.6" fill="url(#mt)"/>
<path d="M3.2 3.6 L9.6 3.6 M3.2 5.8 L9.6 5.8 M3.2 8 L9.6 8" stroke="#405448" stroke-width="0.8"/>
<rect x="10.6" y="3.6" width="4.6" height="4.2" rx="0.8" fill="#b9c6dc"/>
<path d="M3.5 11.2 L13.5 11.2 L12.5 12.4 L4.5 12.4 Z" fill="#4a5a50"/></svg>
<span class="t" style="left:51.20px;top:-0.65px;font-size:14px;line-height:18px;color:#111;transform:scaleX(1.0162);">DC motor DC</span>
</div>
<div class="tree-row" style="left:25.9px;top:560.8px;width:140px;height:20px;">
<div style="left:13px;top:9.5px;width:14px;height:1px;background:transparent;background-image:repeating-linear-gradient(90deg,#8a8a8a 0 1px,transparent 1px 2px)"></div>
<svg style="left:28.4px;top:3.8px" width="17" height="12.6" viewBox="0 0 17 12.6"><rect x="7" y="0" width="2.2" height="2" fill="#6f8878"/>
<rect x="0.3" y="1.2" width="16.4" height="10" rx="3.6" fill="url(#mt)"/>
<path d="M3.2 3.6 L9.6 3.6 M3.2 5.8 L9.6 5.8 M3.2 8 L9.6 8" stroke="#405448" stroke-width="0.8"/>
<rect x="10.6" y="3.6" width="4.6" height="4.2" rx="0.8" fill="#b9c6dc"/>
<path d="M3.5 11.2 L13.5 11.2 L12.5 12.4 L4.5 12.4 Z" fill="#4a5a50"/></svg>
<span class="t" style="left:51.20px;top:-0.65px;font-size:14px;line-height:18px;color:#111;transform:scaleX(1.0162);">DC motor DC</span>
</div>
</div>
<div style="left:160.1px;top:0px;width:21.1px;height:595.4px;background:#f0f0f0;"></div>
<div style="left:169.4px;top:21.6px;width:2.2px;height:304px;background:#787878;border-radius:1px"></div>
<div style="left:1.6px;top:574.6px;width:180px;height:21px;background:#f0f0f0;"></div>
<div style="left:23.4px;top:584.4px;width:38px;height:2.2px;background:#7d7d7d;border-radius:1px"></div>
</div>
<div style="left:421.4px;top:155.6px;width:0.9px;height:595.4px;background:#c4c4c4;"></div>
<div style="left:422.3px;top:155.6px;width:188px;height:595.4px;background:#fff;"></div>
<div style="left:423.3px;top:445px;width:2px;height:2px;background:#444;"></div>
<div style="left:423.3px;top:450px;width:2px;height:2px;background:#444;"></div>
<div style="left:423.3px;top:455px;width:2px;height:2px;background:#444;"></div>
<div style="left:423.3px;top:460px;width:2px;height:2px;background:#444;"></div>
<div class="viewpanel-head" style="left:428.8px;top:155.2px;width:177.2px;height:30.6px;box-sizing:border-box;border:1px solid #4a6078;background:#1e90ff">
<span class="t" style="left:9.20px;top:6.02px;font-size:19px;line-height:24px;color:#fff;font-weight:bold;transform:scaleX(1.0705);">View</span>
</div>
<div class="vbtn" style="left:429.8px;top:187.3px;width:175px;height:38.2px;box-sizing:border-box;border-radius:5px;background:#cce4f7;border:1.8px solid #2f74ba;">
<span class="t" style="left:64.00px;top:8.32px;font-size:13.5px;line-height:17px;color:#333;transform:scaleX(1.0786);">Assets</span>
</div>
<div class="vbtn" style="left:429.8px;top:228.57px;width:175px;height:38.2px;box-sizing:border-box;border-radius:5px;background:#fff;border:1px solid #cacaca;box-shadow:0 1px 0 #ececec;">
<span class="t" style="left:23.70px;top:9.12px;font-size:13.5px;line-height:17px;color:#333;transform:scaleX(1.0388);">Asset Specifications</span>
</div>
<div class="vbtn" style="left:429.8px;top:269.84px;width:175px;height:38.2px;box-sizing:border-box;border-radius:5px;background:#fff;border:1px solid #cacaca;box-shadow:0 1px 0 #ececec;">
<span class="t" style="left:57.20px;top:9.12px;font-size:13.5px;line-height:17px;color:#333;transform:scaleX(1.0405);">Analyses</span>
</div>
<div class="vbtn" style="left:429.8px;top:311.11px;width:175px;height:38.2px;box-sizing:border-box;border-radius:5px;background:#fff;border:1px solid #cacaca;box-shadow:0 1px 0 #ececec;">
<span class="t" style="left:41.20px;top:9.12px;font-size:13.5px;line-height:17px;color:#333;transform:scaleX(1.0462);">Failure Modes</span>
</div>
<div class="vbtn" style="left:429.8px;top:352.38px;width:175px;height:38.2px;box-sizing:border-box;border-radius:5px;background:#fff;border:1px solid #cacaca;box-shadow:0 1px 0 #ececec;">
<span class="t" style="left:55.20px;top:9.12px;font-size:13.5px;line-height:17px;color:#333;transform:scaleX(1.0849);">Indicators</span>
</div>
<div class="vbtn" style="left:429.8px;top:393.65px;width:175px;height:38.2px;box-sizing:border-box;border-radius:5px;background:#fff;border:1px solid #cacaca;box-shadow:0 1px 0 #ececec;">
<span class="t" style="left:67.20px;top:9.12px;font-size:13.5px;line-height:17px;color:#333;transform:scaleX(1.0720);">Tasks</span>
</div>
<div class="vbtn" style="left:429.8px;top:434.92px;width:175px;height:38.2px;box-sizing:border-box;border-radius:5px;background:#fff;border:1px solid #cacaca;box-shadow:0 1px 0 #ececec;">
<span class="t" style="left:46.70px;top:9.12px;font-size:13.5px;line-height:17px;color:#333;transform:scaleX(1.0058);">Checksheets</span>
</div>
<div class="vbtn" style="left:429.8px;top:476.19px;width:175px;height:38.2px;box-sizing:border-box;border-radius:5px;background:#f7f7f7;border:1px solid #e3e3e3;">
<span class="t" style="left:27.70px;top:9.12px;font-size:13.5px;line-height:17px;color:#8a8a8a;transform:scaleX(1.0623);">Requests for Work</span>
</div>
<div class="vbtn" style="left:429.8px;top:517.46px;width:175px;height:38.2px;box-sizing:border-box;border-radius:5px;background:#fff;border:1px solid #cacaca;box-shadow:0 1px 0 #ececec;">
<span class="t" style="left:61.20px;top:9.12px;font-size:13.5px;line-height:17px;color:#333;transform:scaleX(1.0309);">Failures</span>
</div>
<div class="vbtn" style="left:429.8px;top:558.73px;width:175px;height:38.2px;box-sizing:border-box;border-radius:5px;background:#fff;border:1px solid #cacaca;box-shadow:0 1px 0 #ececec;">
<span class="t" style="left:73.70px;top:9.12px;font-size:13.5px;line-height:17px;color:#333;transform:scaleX(0.8942);">RCA</span>
</div>
<div class="vbtn" style="left:429.8px;top:600px;width:175px;height:38.2px;box-sizing:border-box;border-radius:5px;background:#fff;border:1px solid #cacaca;box-shadow:0 1px 0 #ececec;">
<span class="t" style="left:39.20px;top:9.12px;font-size:13.5px;line-height:17px;color:#333;transform:scaleX(1.0437);">Health Indexes</span>
</div>
<div class="vbtn" style="left:429.8px;top:641.27px;width:175px;height:38.2px;box-sizing:border-box;border-radius:5px;background:#fff;border:1px solid #cacaca;box-shadow:0 1px 0 #ececec;">
<span class="t" style="left:54.20px;top:9.12px;font-size:13.5px;line-height:17px;color:#333;transform:scaleX(1.0564);">Templates</span>
</div>
<div class="detail" style="left:609.5px;top:155.2px;width:523.5px;height:595.8px;background:#fff;overflow:hidden">
<div style="left:0.3px;top:0.4px;width:1px;height:595.4px;background:#c4c8cc;"></div>
<div class="detail-head" style="left:0.5px;top:0px;width:523px;height:42.6px;box-sizing:border-box;border:1px solid #4a6078;border-right:none;background:#1e90ff">
<span class="t" style="left:10.00px;top:8.62px;font-size:19px;line-height:24px;color:#fff;font-weight:bold;transform:scaleX(1.0570);">Stage 5 - Water Rinse C - 27567</span>
</div>
<span class="t" style="left:12.30px;top:52.90px;font-size:13px;line-height:16px;color:#222;font-weight:bold;transform:scaleX(1.1388);">Type:</span>
<span class="t" style="left:253.90px;top:52.90px;font-size:13px;line-height:16px;color:#333;transform:scaleX(1.0020);">Washer</span>
<span class="t" style="left:322.50px;top:52.90px;font-size:13px;line-height:16px;color:#333;transform:scaleX(1.0358);">(Maintainable Asset)</span>
<span class="t" style="left:12.30px;top:80.21px;font-size:13px;line-height:16px;color:#222;font-weight:bold;transform:scaleX(1.0897);">Site:</span>
<span class="t" style="left:253.90px;top:80.21px;font-size:13px;line-height:16px;color:#333;transform:scaleX(1.0200);">Valley Power Generation Plant</span>
<span class="t" style="left:12.30px;top:107.52px;font-size:13px;line-height:16px;color:#222;font-weight:bold;transform:scaleX(1.1429);">Parent:</span>
<span class="t" style="left:253.90px;top:107.52px;font-size:13px;line-height:16px;color:#333;transform:scaleX(1.0260);">Valley Power Generation Plant - 27563</span>
<span class="t" style="left:12.30px;top:134.83px;font-size:13px;line-height:16px;color:#222;font-weight:bold;transform:scaleX(1.1279);">Status:</span>
<span class="t" style="left:253.90px;top:134.83px;font-size:13px;line-height:16px;color:#333;transform:scaleX(1.0031);">Working</span>
<span class="t" style="left:12.30px;top:162.14px;font-size:13px;line-height:16px;color:#222;font-weight:bold;transform:scaleX(1.0626);">Age:</span>
<span class="t" style="left:253.90px;top:162.14px;font-size:13px;line-height:16px;color:#333;transform:scaleX(1.0583);">3.000 yrs</span>
<span class="t" style="left:12.30px;top:189.45px;font-size:13px;line-height:16px;color:#222;font-weight:bold;transform:scaleX(1.1174);">Original in service date:</span>
<span class="t" style="left:12.30px;top:216.76px;font-size:13px;line-height:16px;color:#222;font-weight:bold;transform:scaleX(1.1167);">Expected remaining life:</span>
<span class="t" style="left:253.90px;top:216.76px;font-size:13px;line-height:16px;color:#333;transform:scaleX(1.0642);">22.000 yrs</span>
<span class="t" style="left:12.30px;top:244.07px;font-size:13px;line-height:16px;color:#222;font-weight:bold;transform:scaleX(1.1477);">Expected replacement date:</span>
<div class="assets-head" style="left:0.7px;top:277.4px;width:522.8px;height:29px;box-sizing:border-box;border:1px solid #3f5f8a;border-right:none;background:#1e90ff">
<span class="t" style="left:9.50px;top:4.70px;font-size:15px;line-height:19px;color:#fff;font-weight:bold;transform:scaleX(0.9979);">Assets</span>
</div>
<div style="left:0.7px;top:311.2px;width:104.2px;height:28.1px;box-sizing:border-box;border:1px solid #b7b7b7;border-right:3px double #b0b0b0;background:#fff"></div>
<svg style="left:4.5px;top:315.4px" width="19.6" height="16.4" viewBox="0 0 19.6 16.4"><path d="M9.2 2 C4.2 1.6 1.6 5 2 8.8 C2.4 12.4 5.4 14.6 9.6 14.2" fill="none" stroke="#f7941d" stroke-width="3.2" stroke-linecap="round"/>
<path d="M13.2 13.4 C16.6 11.8 17.8 8.8 16.6 5.6" fill="none" stroke="#f47a1a" stroke-width="3" stroke-linecap="round"/>
<path d="M12 0.6 L19 3.6 L13.6 8.4 Z" fill="#f58220"/>
<path d="M7.4 15.8 L12 13.2 L8 11 Z" fill="#f7941d"/></svg>
<div class="clip" style="left:28.8px;top:312.8px;width:53px;height:24px;overflow:hidden">
<span class="t" style="left:-3.50px;top:2.15px;font-size:14px;line-height:18px;color:#222;transform:scaleX(0.9078);">ssets rela</span>
</div>
<svg style="left:88.2px;top:322.6px" width="11.4" height="8" viewBox="0 0 11.4 8"><path d="M1 1.4 L5.7 6.2 L10.4 1.4" fill="none" stroke="#555" stroke-width="1.1"/></svg>
<div style="left:113px;top:312.3px;width:138px;height:25.5px;box-sizing:border-box;border:1px solid #d0d0d0;border-radius:4px;background:#fff"></div>
<span class="t" style="left:133.50px;top:316.45px;font-size:14px;line-height:18px;color:#222;transform:scaleX(0.9726);">Configuration</span>
<div style="left:235px;top:322.8px;width:0;height:0;border-left:5px solid transparent;border-right:5px solid transparent;border-top:5px solid #111"></div>
<div style="left:257.8px;top:311.2px;width:139.5px;height:28px;box-sizing:border-box;border:1px solid #b4b4b4;background:#fff"></div>
<span class="t" style="left:260.00px;top:313.52px;font-size:13.5px;line-height:17px;color:#505050;transform:scaleX(0.9922);">Search Assets related</span>
<div style="left:404px;top:311.2px;width:56.5px;height:28.1px;background:#f1f1f1;"></div>
<div style="left:406px;top:312.8px;width:52.3px;height:24.4px;box-sizing:border-box;border:1px solid #dadada;border-radius:4px;background:#fefefe"></div>
<div style="left:440.3px;top:312.8px;width:1px;height:24.4px;background:#222;"></div>
<svg style="left:413.5px;top:314.8px" width="21" height="21" viewBox="0 0 21 21"><path d="M11.5 11.5 L18.5 19" stroke="#d9953a" stroke-width="3.4" stroke-linecap="round"/>
<path d="M11 11 L13 13" stroke="#8a8f95" stroke-width="2.6"/>
<circle cx="7.5" cy="7.5" r="6" fill="#dff0fd" stroke="#6c93dc" stroke-width="1.8"/><ellipse cx="6" cy="5.6" rx="2.6" ry="1.8" fill="#fff"/></svg>
<div style="left:445px;top:323.8px;width:0;height:0;border-left:4.5px solid transparent;border-right:4.5px solid transparent;border-top:5px solid #111"></div>
<div style="left:465.5px;top:312.1px;width:26px;height:26.2px;background:#b3d7f9;"></div>
<svg style="left:468.9px;top:316.6px" width="19" height="17.8" viewBox="0 0 18 17"><rect x="0.8" y="0.8" width="16.4" height="15.4" rx="1" fill="#fff" stroke="#2c5fb5" stroke-width="1.5"/>
<rect x="3" y="3.6" width="2.4" height="2.2" fill="#d23a2a"/><rect x="3" y="7.4" width="2.4" height="2.2" fill="#3a9a3a"/><rect x="3" y="11.2" width="2.4" height="2.2" fill="#e08a20"/>
<path d="M7 4.7 L15 4.7 M7 8.5 L15 8.5 M7 12.3 L15 12.3" stroke="#2c5fb5" stroke-width="1.4"/></svg>
<svg style="left:501.1px;top:316.2px" width="19.4" height="18" viewBox="0 0 20 17"><rect x="0.8" y="0.8" width="18.4" height="15.4" rx="1" fill="#fff" stroke="#2c5fb5" stroke-width="1.5"/><rect x="0.8" y="0.8" width="18.4" height="2.6" fill="#2c5fb5"/>
<rect x="3" y="6" width="5.5" height="5.5" fill="#c9853a"/><rect x="4.5" y="7.5" width="2.5" height="2.5" fill="#6b3a10"/>
<path d="M10.5 6.8 L17 6.8 M10.5 9.6 L17 9.6 M10.5 12.4 L17 12.4 M3 13.6 L8.5 13.6" stroke="#2c5fb5" stroke-width="1.3"/></svg>
<div style="left:1px;top:344.3px;width:522.5px;height:1.2px;background:#c2c6cb;"></div>
<div class="grid-head" style="left:1px;top:345.5px;width:522.5px;height:35.3px;background:#edeff4">
<div style="left:26.1px;top:0px;width:1.6px;height:35.3px;background:#8a8d93;"></div>
<div style="left:275.9px;top:0px;width:1.6px;height:35.3px;background:#8a8d93;"></div>
<span class="t" style="left:34.50px;top:9.42px;font-size:13.5px;line-height:17px;color:#222;transform:scaleX(1.0662);">Asset</span>
<span class="t" style="left:284.50px;top:9.42px;font-size:13.5px;line-height:17px;color:#222;transform:scaleX(0.9996);">Name</span>
<svg style="left:254px;top:13.3px" width="9.5" height="10" viewBox="0 0 9.5 10"><path d="M0.6 9.4 L4.8 0.8 L9 9.4 Z" fill="#fff"/><path d="M0.6 9.4 L4.8 0.8" fill="none" stroke="#a8a8a8" stroke-width="0.9"/></svg>
<span class="t" style="left:263.70px;top:14.61px;font-size:9.5px;line-height:12px;color:#222;font-weight:bold;transform:scaleX(0.8);">1</span>
</div>
<div class="grid-row" style="left:1px;top:380.6px;width:521.7px;height:34.85px;box-sizing:border-box;border-bottom:1px solid #e0e0e0;background:#fff">
<div style="left:276.2px;top:0px;width:1px;height:34px;background:#e2e2e2;"></div>
<div style="left:26.8px;top:0px;width:1px;height:34px;background:#e6e6e6;"></div>
<svg style="left:3.7px;top:6.6px" width="16.53" height="17.4" viewBox="0 0 19 20"><g transform="translate(3.9,5.6) scale(1)"><path d="M0.6 -3.9 C2.3 -1.4 2.7 0.2 2.7 1.3 C2.7 2.8 1.5 3.8 0 3.8 C-1.5 3.8 -2.7 2.8 -2.7 1.3 C-2.7 -0.2 -1.4 -1.8 0.6 -3.9 Z" fill="#a9b7c6" stroke="#35424f" stroke-width="0.8"/><path d="M-0.3 -0.9 C-1.3 0.2 -1.4 1.4 -0.8 2.2" stroke="#f4f8fb" stroke-width="1.1" fill="none"/></g><g transform="translate(15.2,8) scale(1)"><path d="M0.6 -3.9 C2.3 -1.4 2.7 0.2 2.7 1.3 C2.7 2.8 1.5 3.8 0 3.8 C-1.5 3.8 -2.7 2.8 -2.7 1.3 C-2.7 -0.2 -1.4 -1.8 0.6 -3.9 Z" fill="#a9b7c6" stroke="#35424f" stroke-width="0.8"/><path d="M-0.3 -0.9 C-1.3 0.2 -1.4 1.4 -0.8 2.2" stroke="#f4f8fb" stroke-width="1.1" fill="none"/></g><g transform="translate(7.8,14.9) scale(1)"><path d="M0.6 -3.9 C2.3 -1.4 2.7 0.2 2.7 1.3 C2.7 2.8 1.5 3.8 0 3.8 C-1.5 3.8 -2.7 2.8 -2.7 1.3 C-2.7 -0.2 -1.4 -1.8 0.6 -3.9 Z" fill="#a9b7c6" stroke="#35424f" stroke-width="0.8"/><path d="M-0.3 -0.9 C-1.3 0.2 -1.4 1.4 -0.8 2.2" stroke="#f4f8fb" stroke-width="1.1" fill="none"/></g></svg>
<span class="t" style="left:30.60px;top:8.98px;font-size:14.5px;line-height:18px;color:#222;transform:scaleX(0.9299);">27567</span>
<span class="t" style="left:279.90px;top:8.98px;font-size:14.5px;line-height:18px;color:#222;transform:scaleX(0.9233);">Stage 5 - Water Rinse C</span>
</div>
<div class="grid-row" style="left:1px;top:415.45px;width:521.7px;height:34.85px;box-sizing:border-box;border-bottom:1px solid #e0e0e0;background:#f8f8f8">
<div style="left:276.2px;top:0px;width:1px;height:34px;background:#e2e2e2;"></div>
<div style="left:26.8px;top:0px;width:1px;height:34px;background:#e6e6e6;"></div>
<svg style="left:3.7px;top:6.6px" width="16.53" height="17.4" viewBox="0 0 19 20"><g transform="translate(3.9,5.6) scale(1)"><path d="M0.6 -3.9 C2.3 -1.4 2.7 0.2 2.7 1.3 C2.7 2.8 1.5 3.8 0 3.8 C-1.5 3.8 -2.7 2.8 -2.7 1.3 C-2.7 -0.2 -1.4 -1.8 0.6 -3.9 Z" fill="#a9b7c6" stroke="#35424f" stroke-width="0.8"/><path d="M-0.3 -0.9 C-1.3 0.2 -1.4 1.4 -0.8 2.2" stroke="#f4f8fb" stroke-width="1.1" fill="none"/></g><g transform="translate(15.2,8) scale(1)"><path d="M0.6 -3.9 C2.3 -1.4 2.7 0.2 2.7 1.3 C2.7 2.8 1.5 3.8 0 3.8 C-1.5 3.8 -2.7 2.8 -2.7 1.3 C-2.7 -0.2 -1.4 -1.8 0.6 -3.9 Z" fill="#a9b7c6" stroke="#35424f" stroke-width="0.8"/><path d="M-0.3 -0.9 C-1.3 0.2 -1.4 1.4 -0.8 2.2" stroke="#f4f8fb" stroke-width="1.1" fill="none"/></g><g transform="translate(7.8,14.9) scale(1)"><path d="M0.6 -3.9 C2.3 -1.4 2.7 0.2 2.7 1.3 C2.7 2.8 1.5 3.8 0 3.8 C-1.5 3.8 -2.7 2.8 -2.7 1.3 C-2.7 -0.2 -1.4 -1.8 0.6 -3.9 Z" fill="#a9b7c6" stroke="#35424f" stroke-width="0.8"/><path d="M-0.3 -0.9 C-1.3 0.2 -1.4 1.4 -0.8 2.2" stroke="#f4f8fb" stroke-width="1.1" fill="none"/></g></svg>
<span class="t" style="left:30.60px;top:8.98px;font-size:14.5px;line-height:18px;color:#222;transform:scaleX(0.9299);">27568</span>
<span class="t" style="left:279.90px;top:8.98px;font-size:14.5px;line-height:18px;color:#222;transform:scaleX(0.9053);">AX Spray Header AX</span>
</div>
<div class="grid-row" style="left:1px;top:450.3px;width:521.7px;height:34.85px;box-sizing:border-box;border-bottom:1px solid #e0e0e0;background:#fff">
<div style="left:276.2px;top:0px;width:1px;height:34px;background:#e2e2e2;"></div>
<div style="left:26.8px;top:0px;width:1px;height:34px;background:#e6e6e6;"></div>
<svg style="left:3.7px;top:6.6px" width="16.53" height="17.4" viewBox="0 0 19 20"><g transform="translate(3.9,5.6) scale(1)"><path d="M0.6 -3.9 C2.3 -1.4 2.7 0.2 2.7 1.3 C2.7 2.8 1.5 3.8 0 3.8 C-1.5 3.8 -2.7 2.8 -2.7 1.3 C-2.7 -0.2 -1.4 -1.8 0.6 -3.9 Z" fill="#a9b7c6" stroke="#35424f" stroke-width="0.8"/><path d="M-0.3 -0.9 C-1.3 0.2 -1.4 1.4 -0.8 2.2" stroke="#f4f8fb" stroke-width="1.1" fill="none"/></g><g transform="translate(15.2,8) scale(1)"><path d="M0.6 -3.9 C2.3 -1.4 2.7 0.2 2.7 1.3 C2.7 2.8 1.5 3.8 0 3.8 C-1.5 3.8 -2.7 2.8 -2.7 1.3 C-2.7 -0.2 -1.4 -1.8 0.6 -3.9 Z" fill="#a9b7c6" stroke="#35424f" stroke-width="0.8"/><path d="M-0.3 -0.9 C-1.3 0.2 -1.4 1.4 -0.8 2.2" stroke="#f4f8fb" stroke-width="1.1" fill="none"/></g><g transform="translate(7.8,14.9) scale(1)"><path d="M0.6 -3.9 C2.3 -1.4 2.7 0.2 2.7 1.3 C2.7 2.8 1.5 3.8 0 3.8 C-1.5 3.8 -2.7 2.8 -2.7 1.3 C-2.7 -0.2 -1.4 -1.8 0.6 -3.9 Z" fill="#a9b7c6" stroke="#35424f" stroke-width="0.8"/><path d="M-0.3 -0.9 C-1.3 0.2 -1.4 1.4 -0.8 2.2" stroke="#f4f8fb" stroke-width="1.1" fill="none"/></g></svg>
<span class="t" style="left:30.60px;top:8.98px;font-size:14.5px;line-height:18px;color:#222;transform:scaleX(0.9299);">27569</span>
<span class="t" style="left:279.90px;top:8.98px;font-size:14.5px;line-height:18px;color:#222;transform:scaleX(0.8472);">Pump</span>
</div>
</div>
</div>
</div>
</body></html>
